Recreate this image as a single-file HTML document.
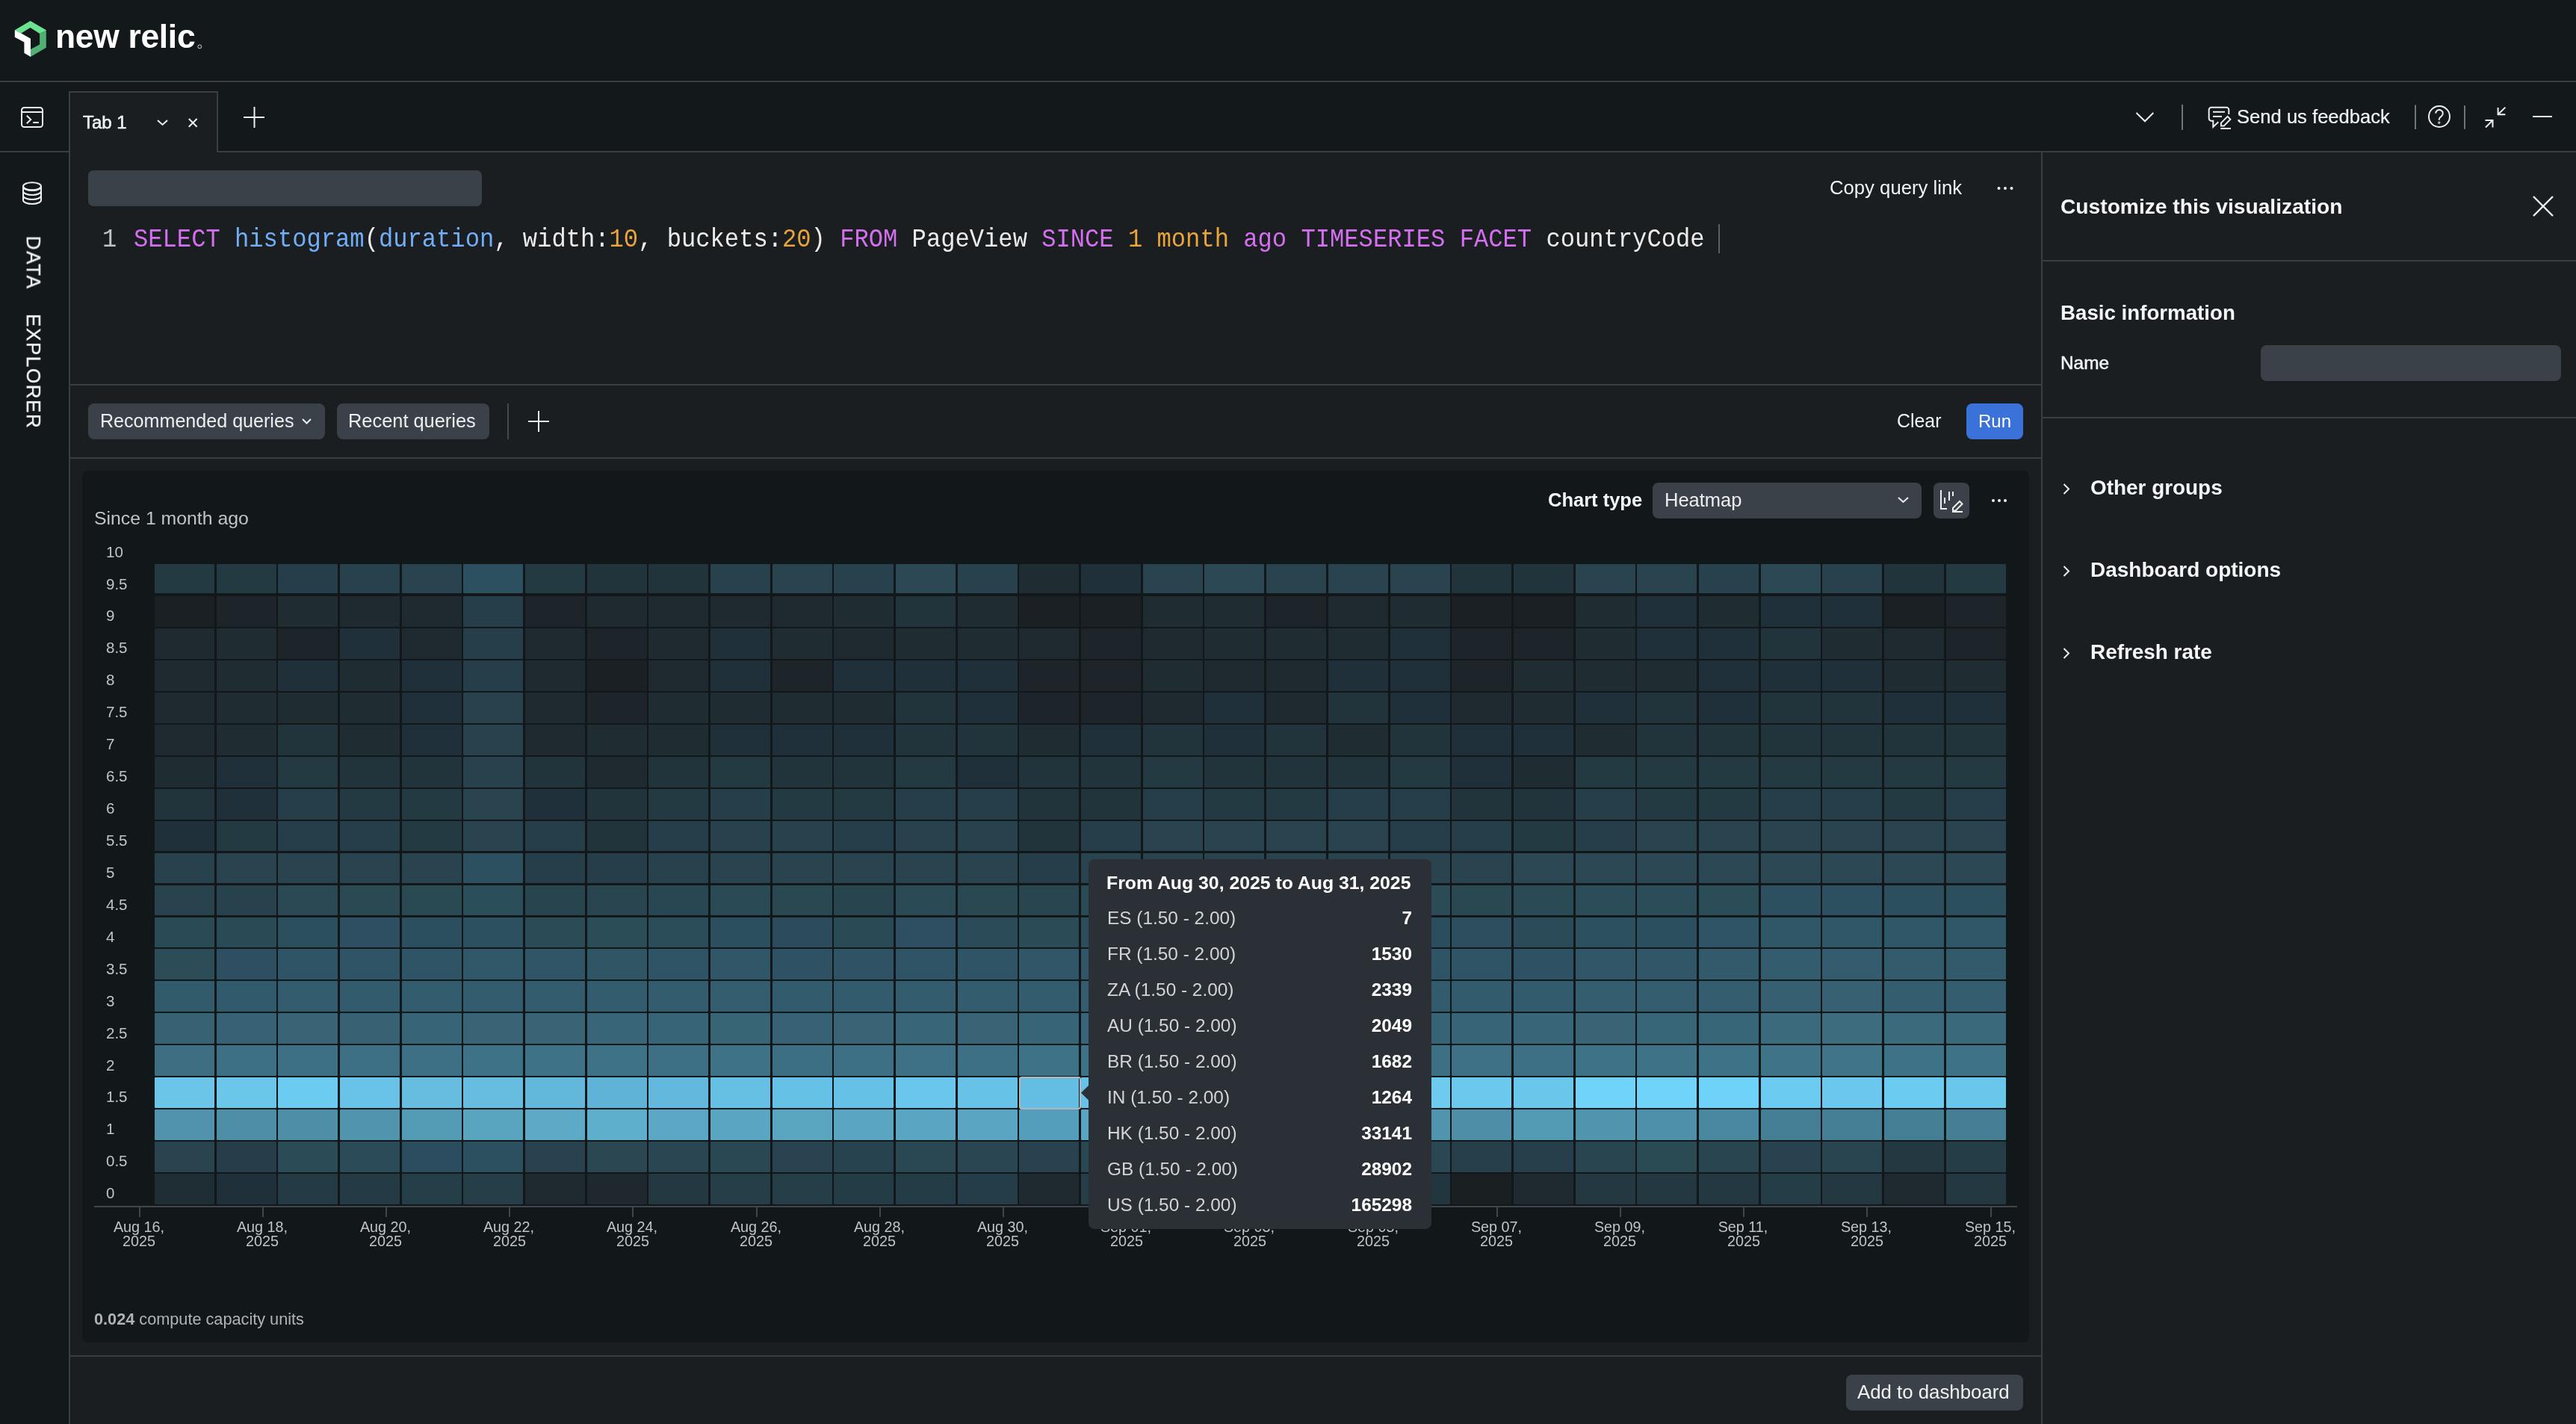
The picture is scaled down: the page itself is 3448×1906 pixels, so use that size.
<!DOCTYPE html>
<html><head><meta charset="utf-8">
<style>
*{box-sizing:border-box;margin:0;padding:0}
html,body{width:3448px;height:1906px;overflow:hidden;background:#1a1e21}
body{position:relative;font-family:"Liberation Sans",sans-serif;color:#eceef0}
.a{position:absolute}
.t{position:absolute;white-space:nowrap;line-height:1;will-change:transform}
.b{font-weight:bold}
.ln{position:absolute;background:#393e44}
.btn{position:absolute;background:#3b4148;border-radius:8px}
.mono{font-family:"Liberation Mono",monospace}
.hm{position:absolute;border-radius:1px}
.yl{position:absolute;left:0;width:200px;white-space:nowrap;line-height:1;font-size:20.5px;color:#c0c4c8;will-change:transform}
.xl{position:absolute;width:120px;text-align:center;white-space:nowrap;line-height:1;font-size:19.8px;color:#c0c4c8;will-change:transform}
.tk{position:absolute;width:2px;height:13px;top:1616px;background:#40464d}
.tr{position:absolute;left:1482px;width:408px;line-height:1;font-size:24.4px;white-space:nowrap;will-change:transform}
.tr span{position:absolute;right:0;top:0;font-weight:bold;color:#fff}
.tr em{font-style:normal;color:#d2d5d8}
svg{position:absolute;overflow:visible}
</style></head><body>
<!-- header -->
<div class="a" style="left:0;top:0;width:3448px;height:204px;background:#13191b"></div>
<svg style="left:0;top:0" width="90" height="90" viewBox="0 0 90 90">
 <polygon fill="#6be391" points="19.8,40.3 40.6,28 61.8,40.3 61.8,41 53.1,44.9 40.6,37.1 28.3,44.4"/>
 <polygon fill="#52af74" points="61.8,41 61.8,63.8 41,75.9 41,66.1 53.1,59.5 53.1,44.9"/>
 <polygon fill="#ffffff" points="19.8,40.3 28.3,44.4 41,51.8 41,75.9 32.4,71.1 32.4,56.5 19.8,49.7"/>
</svg>
<div class="t b" style="left:74px;top:27px;font-size:44.4px;letter-spacing:-0.3px;color:#fff">new relic</div>
<svg style="left:0;top:0" width="300" height="100" viewBox="0 0 300 100"><circle cx="267.3" cy="62.4" r="2.4" fill="none" stroke="#fff" stroke-width="0.8"/></svg>
<div class="ln" style="left:0;top:108px;width:3448px;height:2px"></div>
<!-- tab bar -->
<svg style="left:0;top:0" width="100" height="200" viewBox="0 0 100 200" fill="none" stroke="#eceef0" stroke-width="2">
 <rect x="29" y="144" width="28" height="26" rx="3.5"/>
 <line x1="29" y1="150" x2="57" y2="150"/>
 <polyline points="35.8,154.8 41.2,160 35.8,165.2"/>
 <line x1="44.2" y1="164" x2="51.8" y2="164"/>
</svg>
<div class="a" style="left:92px;top:122px;width:200px;height:82px;background:#1a1e21;border:2px solid #393e44;border-bottom:none"></div>
<div class="t" style="left:111px;top:151.8px;font-size:24px;color:#f0f2f4;-webkit-text-stroke:0.55px #f0f2f4">Tab 1</div>
<svg style="left:0;top:0" width="400" height="200" viewBox="0 0 400 200" fill="none" stroke="#eceef0" stroke-width="2">
 <polyline points="211,161 217.5,167 224,161"/>
 <line x1="252.8" y1="159" x2="263.6" y2="169.8"/><line x1="263.6" y1="159" x2="252.8" y2="169.8"/>
 <line x1="340.5" y1="143" x2="340.5" y2="171"/><line x1="326" y1="157" x2="354" y2="157"/>
</svg>
<div class="ln" style="left:0;top:202px;width:92px;height:2px"></div>
<div class="ln" style="left:290px;top:202px;width:3158px;height:2px"></div>
<!-- top right -->
<svg style="left:0;top:0" width="3448" height="200" viewBox="0 0 3448 200" fill="none" stroke="#eceef0" stroke-width="2">
 <polyline points="2859.5,151 2871,162.3 2882.3,151"/>
 <line x1="2921" y1="140" x2="2921" y2="174" stroke="#70757b"/>
 <line x1="3233" y1="140.5" x2="3233" y2="173" stroke="#70757b"/>
 <line x1="3299" y1="141.3" x2="3299" y2="172.7" stroke="#70757b"/>
 <path d="M2983.3,153 V147 a3.3,3.3 0 0 0 -3.3,-3.3 H2960 a3.3,3.3 0 0 0 -3.3,3.3 V158.4 a3.3,3.3 0 0 0 3.3,3.3 H2962.3 V170 L2969.3,163.3"/>
 <line x1="2962" y1="149.8" x2="2978" y2="149.8"/><line x1="2962" y1="155.9" x2="2974" y2="155.9"/>
 <path d="M2972.9,168.6 V164.6 L2981.6,155.9 L2985.4,159.7 L2976.7,168.6 Z"/><line x1="2972.3" y1="172" x2="2986" y2="172"/>
 <circle cx="3265" cy="156" r="14"/>
 <path d="M3260.2,151.8 a4.8,4.8 0 1 1 7.4,4 c-1.7,1.1 -2.8,1.9 -2.8,3.7 v1.3"/>
 <circle cx="3264.8" cy="164.2" r="0.5" stroke-width="2.2"/>
 <path d="M3327,170.5 L3336.5,161 M3326.5,161 H3336.5 V170.5 M3353.4,143.6 L3343.6,153.3 M3343.6,144 V153.3 H3353.4"/>
 <line x1="3390" y1="156" x2="3416" y2="156"/>
</svg>
<div class="t" style="left:2994px;top:143.5px;font-size:25.6px;color:#f0f2f4;-webkit-text-stroke:0.2px #f0f2f4">Send us feedback</div>
<!-- sidebar -->
<div class="a" style="left:0;top:204px;width:92px;height:1702px;background:#13191b"></div>
<div class="ln" style="left:92px;top:204px;width:2px;height:1702px"></div>
<svg style="left:0;top:0" width="90" height="300" viewBox="0 0 90 300" fill="none" stroke="#eceef0" stroke-width="2">
 <ellipse cx="43" cy="249.3" rx="12" ry="5"/>
 <path d="M31,249.3 v18.7 a12,5 0 0 0 24,0 v-18.7 M31,250 a12,5 0 0 0 24,0 M31,256 a12,5 0 0 0 24,0 M31,262 a12,5 0 0 0 24,0"/>
</svg>
<div class="t" style="left:0;top:0;font-size:26px;letter-spacing:1.6px;color:#f0f2f4;-webkit-text-stroke:0.35px #f0f2f4;transform-origin:0 0;transform:translate(57.9px,315.6px) rotate(90deg)">DATA</div>
<div class="t" style="left:0;top:0;font-size:26px;letter-spacing:1.6px;color:#f0f2f4;-webkit-text-stroke:0.35px #f0f2f4;transform-origin:0 0;transform:translate(57.9px,420px) rotate(90deg)">EXPLORER</div>
<!-- editor -->
<div class="btn" style="left:118px;top:228px;width:527px;height:48px;border-radius:7px"></div>
<div class="t mono" style="left:136.5px;top:305.6px;font-size:32.15px;color:#c0c4c8;transform-origin:0 24.4px;transform:scaleY(1.11)">1</div>
<div class="t mono" style="left:178.5px;top:305.6px;font-size:32.15px;color:#ececec;transform-origin:0 24.4px;transform:scaleY(1.11)"><span style="color:#d46ff0">SELECT</span> <span style="color:#72aef5">histogram</span>(<span style="color:#72aef5">duration</span>, width:<span style="color:#e9a43a">10</span>, buckets:<span style="color:#e9a43a">20</span>) <span style="color:#d46ff0">FROM</span> PageView <span style="color:#d46ff0">SINCE</span> <span style="color:#e9a43a">1 month</span> <span style="color:#d46ff0">ago</span> <span style="color:#d46ff0">TIMESERIES</span> <span style="color:#d46ff0">FACET</span> countryCode</div>
<div class="a" style="left:2300px;top:300px;width:2px;height:39px;background:#5a5f64"></div>
<div class="t" style="left:2449px;top:239px;font-size:25.7px;color:#f0f2f4">Copy query link</div>
<svg style="left:0;top:0" width="3448" height="800" viewBox="0 0 3448 800" fill="#eceef0">
 <circle cx="2675.5" cy="252" r="2"/><circle cx="2684" cy="252" r="2"/><circle cx="2692.5" cy="252" r="2"/>
</svg>
<div class="ln" style="left:94px;top:514px;width:2638px;height:2px"></div>
<!-- toolbar -->
<div class="btn" style="left:118px;top:540px;width:317px;height:48px"></div>
<div class="t" style="left:134px;top:551px;font-size:25.1px;color:#eceef0">Recommended queries</div>
<div class="btn" style="left:451px;top:540px;width:204px;height:48px"></div>
<div class="t" style="left:466px;top:551px;font-size:25.4px;color:#eceef0">Recent queries</div>
<div class="a" style="left:679px;top:540px;width:2px;height:48px;background:#43484e"></div>
<svg style="left:0;top:0" width="3448" height="800" viewBox="0 0 3448 800" fill="none" stroke="#eceef0" stroke-width="2">
 <polyline points="405,561 410.5,566.5 416,561"/>
 <line x1="721" y1="550" x2="721" y2="578"/><line x1="707" y1="564" x2="735" y2="564"/>
</svg>
<div class="t" style="left:2539px;top:551px;font-size:24.9px;color:#f0f2f4">Clear</div>
<div class="a" style="left:2632px;top:540px;width:76px;height:48px;background:#3a72d9;border-radius:8px"></div>
<div class="t" style="left:2648px;top:552px;font-size:24px;color:#fff">Run</div>
<div class="ln" style="left:94px;top:612px;width:2638px;height:2px"></div>
<!-- chart card -->
<div class="a" style="left:110px;top:630px;width:2606px;height:1167px;background:#12181a;border-radius:8px"></div>
<div class="t" style="left:126px;top:681.5px;font-size:24.8px;color:#c0c4c8">Since 1 month ago</div>
<div class="t b" style="left:2072px;top:657px;font-size:25.5px;color:#f4f6f8">Chart type</div>
<div class="btn" style="left:2212px;top:646px;width:360px;height:48px"></div>
<div class="t" style="left:2228px;top:657px;font-size:25.5px;color:#eceef0">Heatmap</div>
<div class="btn" style="left:2588px;top:646px;width:48px;height:48px"></div>
<svg style="left:0;top:0" width="3448" height="800" viewBox="0 0 3448 800" fill="none" stroke="#eceef0" stroke-width="2">
 <polyline points="2541,666 2547.5,672 2554,666"/>
 <path d="M2598,656 v25 h8 M2603,674 v-8 M2609,670 v-12 M2614,664 v-6"/>
 <path d="M2614,680 l9,-9 l3.5,3.5 l-9,9 h-3.5 z M2613,685 h14"/>
</svg>
<svg style="left:0;top:0" width="3448" height="800" viewBox="0 0 3448 800" fill="#eceef0">
 <circle cx="2668" cy="670" r="2"/><circle cx="2676" cy="670" r="2"/><circle cx="2684" cy="670" r="2"/>
</svg>
<div class="yl" style="left:142px;top:728.6px">10</div>
<div class="yl" style="left:142px;top:771.5px">9.5</div>
<div class="yl" style="left:142px;top:814.4px">9</div>
<div class="yl" style="left:142px;top:857.4px">8.5</div>
<div class="yl" style="left:142px;top:900.3px">8</div>
<div class="yl" style="left:142px;top:943.2px">7.5</div>
<div class="yl" style="left:142px;top:986.2px">7</div>
<div class="yl" style="left:142px;top:1029.1px">6.5</div>
<div class="yl" style="left:142px;top:1072.0px">6</div>
<div class="yl" style="left:142px;top:1114.9px">5.5</div>
<div class="yl" style="left:142px;top:1157.9px">5</div>
<div class="yl" style="left:142px;top:1200.8px">4.5</div>
<div class="yl" style="left:142px;top:1243.7px">4</div>
<div class="yl" style="left:142px;top:1286.7px">3.5</div>
<div class="yl" style="left:142px;top:1329.6px">3</div>
<div class="yl" style="left:142px;top:1372.5px">2.5</div>
<div class="yl" style="left:142px;top:1415.5px">2</div>
<div class="yl" style="left:142px;top:1458.4px">1.5</div>
<div class="yl" style="left:142px;top:1501.3px">1</div>
<div class="yl" style="left:142px;top:1544.2px">0.5</div>
<div class="yl" style="left:142px;top:1587.2px">0</div>
<div class="hm" style="left:206.8px;top:755.0px;width:80.1px;height:39.0px;background:#243a43"></div>
<div class="hm" style="left:289.5px;top:755.0px;width:80.1px;height:39.0px;background:#243a43"></div>
<div class="hm" style="left:372.2px;top:755.0px;width:80.1px;height:39.0px;background:#263e49"></div>
<div class="hm" style="left:454.9px;top:755.0px;width:80.1px;height:39.0px;background:#28424d"></div>
<div class="hm" style="left:537.6px;top:755.0px;width:80.1px;height:39.0px;background:#29444f"></div>
<div class="hm" style="left:620.2px;top:755.0px;width:80.1px;height:39.0px;background:#2d5060"></div>
<div class="hm" style="left:702.9px;top:755.0px;width:80.1px;height:39.0px;background:#243a43"></div>
<div class="hm" style="left:785.6px;top:755.0px;width:80.1px;height:39.0px;background:#22343b"></div>
<div class="hm" style="left:868.3px;top:755.0px;width:80.1px;height:39.0px;background:#22343b"></div>
<div class="hm" style="left:951.0px;top:755.0px;width:80.1px;height:39.0px;background:#28424d"></div>
<div class="hm" style="left:1033.7px;top:755.0px;width:80.1px;height:39.0px;background:#29444f"></div>
<div class="hm" style="left:1116.3px;top:755.0px;width:80.1px;height:39.0px;background:#28424d"></div>
<div class="hm" style="left:1199.0px;top:755.0px;width:80.1px;height:39.0px;background:#2b4854"></div>
<div class="hm" style="left:1281.7px;top:755.0px;width:80.1px;height:39.0px;background:#28424d"></div>
<div class="hm" style="left:1364.4px;top:755.0px;width:80.1px;height:39.0px;background:#1f2c32"></div>
<div class="hm" style="left:1447.0px;top:755.0px;width:80.1px;height:39.0px;background:#20303a"></div>
<div class="hm" style="left:1529.7px;top:755.0px;width:80.1px;height:39.0px;background:#29444f"></div>
<div class="hm" style="left:1612.4px;top:755.0px;width:80.1px;height:39.0px;background:#2b4854"></div>
<div class="hm" style="left:1695.1px;top:755.0px;width:80.1px;height:39.0px;background:#29444f"></div>
<div class="hm" style="left:1777.8px;top:755.0px;width:80.1px;height:39.0px;background:#29444f"></div>
<div class="hm" style="left:1860.5px;top:755.0px;width:80.1px;height:39.0px;background:#29444f"></div>
<div class="hm" style="left:1943.1px;top:755.0px;width:80.1px;height:39.0px;background:#22343b"></div>
<div class="hm" style="left:2025.8px;top:755.0px;width:80.1px;height:39.0px;background:#22343b"></div>
<div class="hm" style="left:2108.5px;top:755.0px;width:80.1px;height:39.0px;background:#29444f"></div>
<div class="hm" style="left:2191.2px;top:755.0px;width:80.1px;height:39.0px;background:#29444f"></div>
<div class="hm" style="left:2273.8px;top:755.0px;width:80.1px;height:39.0px;background:#28424d"></div>
<div class="hm" style="left:2356.5px;top:755.0px;width:80.1px;height:39.0px;background:#2b4854"></div>
<div class="hm" style="left:2439.2px;top:755.0px;width:80.1px;height:39.0px;background:#28424d"></div>
<div class="hm" style="left:2521.9px;top:755.0px;width:80.1px;height:39.0px;background:#22343b"></div>
<div class="hm" style="left:2604.6px;top:755.0px;width:80.1px;height:39.0px;background:#243a43"></div>
<div class="hm" style="left:206.8px;top:798.0px;width:80.1px;height:40.9px;background:#1a2023"></div>
<div class="hm" style="left:289.5px;top:798.0px;width:80.1px;height:40.9px;background:#1d252a"></div>
<div class="hm" style="left:372.2px;top:798.0px;width:80.1px;height:40.9px;background:#1f2c32"></div>
<div class="hm" style="left:454.9px;top:798.0px;width:80.1px;height:40.9px;background:#1f2a30"></div>
<div class="hm" style="left:537.6px;top:798.0px;width:80.1px;height:40.9px;background:#1f2a30"></div>
<div class="hm" style="left:620.2px;top:798.0px;width:80.1px;height:40.9px;background:#263e49"></div>
<div class="hm" style="left:702.9px;top:798.0px;width:80.1px;height:40.9px;background:#1d252a"></div>
<div class="hm" style="left:785.6px;top:798.0px;width:80.1px;height:40.9px;background:#1f2a30"></div>
<div class="hm" style="left:868.3px;top:798.0px;width:80.1px;height:40.9px;background:#1f2a30"></div>
<div class="hm" style="left:951.0px;top:798.0px;width:80.1px;height:40.9px;background:#1f2a30"></div>
<div class="hm" style="left:1033.7px;top:798.0px;width:80.1px;height:40.9px;background:#1f2a30"></div>
<div class="hm" style="left:1116.3px;top:798.0px;width:80.1px;height:40.9px;background:#1f2c32"></div>
<div class="hm" style="left:1199.0px;top:798.0px;width:80.1px;height:40.9px;background:#22343b"></div>
<div class="hm" style="left:1281.7px;top:798.0px;width:80.1px;height:40.9px;background:#1f2c32"></div>
<div class="hm" style="left:1364.4px;top:798.0px;width:80.1px;height:40.9px;background:#1a2023"></div>
<div class="hm" style="left:1447.0px;top:798.0px;width:80.1px;height:40.9px;background:#1a2023"></div>
<div class="hm" style="left:1529.7px;top:798.0px;width:80.1px;height:40.9px;background:#1f2c32"></div>
<div class="hm" style="left:1612.4px;top:798.0px;width:80.1px;height:40.9px;background:#1f2c32"></div>
<div class="hm" style="left:1695.1px;top:798.0px;width:80.1px;height:40.9px;background:#1d252a"></div>
<div class="hm" style="left:1777.8px;top:798.0px;width:80.1px;height:40.9px;background:#1f2a30"></div>
<div class="hm" style="left:1860.5px;top:798.0px;width:80.1px;height:40.9px;background:#1f2c32"></div>
<div class="hm" style="left:1943.1px;top:798.0px;width:80.1px;height:40.9px;background:#1a2023"></div>
<div class="hm" style="left:2025.8px;top:798.0px;width:80.1px;height:40.9px;background:#1a2023"></div>
<div class="hm" style="left:2108.5px;top:798.0px;width:80.1px;height:40.9px;background:#1f2c32"></div>
<div class="hm" style="left:2191.2px;top:798.0px;width:80.1px;height:40.9px;background:#20303a"></div>
<div class="hm" style="left:2273.8px;top:798.0px;width:80.1px;height:40.9px;background:#1f2c32"></div>
<div class="hm" style="left:2356.5px;top:798.0px;width:80.1px;height:40.9px;background:#20303a"></div>
<div class="hm" style="left:2439.2px;top:798.0px;width:80.1px;height:40.9px;background:#20303a"></div>
<div class="hm" style="left:2521.9px;top:798.0px;width:80.1px;height:40.9px;background:#1a2023"></div>
<div class="hm" style="left:2604.6px;top:798.0px;width:80.1px;height:40.9px;background:#1d252a"></div>
<div class="hm" style="left:206.8px;top:840.9px;width:80.1px;height:40.9px;background:#1f2a30"></div>
<div class="hm" style="left:289.5px;top:840.9px;width:80.1px;height:40.9px;background:#1f2c32"></div>
<div class="hm" style="left:372.2px;top:840.9px;width:80.1px;height:40.9px;background:#1d252a"></div>
<div class="hm" style="left:454.9px;top:840.9px;width:80.1px;height:40.9px;background:#20303a"></div>
<div class="hm" style="left:537.6px;top:840.9px;width:80.1px;height:40.9px;background:#1f2a30"></div>
<div class="hm" style="left:620.2px;top:840.9px;width:80.1px;height:40.9px;background:#263e49"></div>
<div class="hm" style="left:702.9px;top:840.9px;width:80.1px;height:40.9px;background:#1f2a30"></div>
<div class="hm" style="left:785.6px;top:840.9px;width:80.1px;height:40.9px;background:#1d252a"></div>
<div class="hm" style="left:868.3px;top:840.9px;width:80.1px;height:40.9px;background:#1f2a30"></div>
<div class="hm" style="left:951.0px;top:840.9px;width:80.1px;height:40.9px;background:#20303a"></div>
<div class="hm" style="left:1033.7px;top:840.9px;width:80.1px;height:40.9px;background:#1f2c32"></div>
<div class="hm" style="left:1116.3px;top:840.9px;width:80.1px;height:40.9px;background:#1f2a30"></div>
<div class="hm" style="left:1199.0px;top:840.9px;width:80.1px;height:40.9px;background:#1f2c32"></div>
<div class="hm" style="left:1281.7px;top:840.9px;width:80.1px;height:40.9px;background:#1f2c32"></div>
<div class="hm" style="left:1364.4px;top:840.9px;width:80.1px;height:40.9px;background:#1f2a30"></div>
<div class="hm" style="left:1447.0px;top:840.9px;width:80.1px;height:40.9px;background:#1d252a"></div>
<div class="hm" style="left:1529.7px;top:840.9px;width:80.1px;height:40.9px;background:#1f2a30"></div>
<div class="hm" style="left:1612.4px;top:840.9px;width:80.1px;height:40.9px;background:#1f2c32"></div>
<div class="hm" style="left:1695.1px;top:840.9px;width:80.1px;height:40.9px;background:#1f2c32"></div>
<div class="hm" style="left:1777.8px;top:840.9px;width:80.1px;height:40.9px;background:#1f2c32"></div>
<div class="hm" style="left:1860.5px;top:840.9px;width:80.1px;height:40.9px;background:#20303a"></div>
<div class="hm" style="left:1943.1px;top:840.9px;width:80.1px;height:40.9px;background:#1d252a"></div>
<div class="hm" style="left:2025.8px;top:840.9px;width:80.1px;height:40.9px;background:#1d252a"></div>
<div class="hm" style="left:2108.5px;top:840.9px;width:80.1px;height:40.9px;background:#1f2c32"></div>
<div class="hm" style="left:2191.2px;top:840.9px;width:80.1px;height:40.9px;background:#20303a"></div>
<div class="hm" style="left:2273.8px;top:840.9px;width:80.1px;height:40.9px;background:#20303a"></div>
<div class="hm" style="left:2356.5px;top:840.9px;width:80.1px;height:40.9px;background:#22343b"></div>
<div class="hm" style="left:2439.2px;top:840.9px;width:80.1px;height:40.9px;background:#1f2c32"></div>
<div class="hm" style="left:2521.9px;top:840.9px;width:80.1px;height:40.9px;background:#1f2a30"></div>
<div class="hm" style="left:2604.6px;top:840.9px;width:80.1px;height:40.9px;background:#1d252a"></div>
<div class="hm" style="left:206.8px;top:883.9px;width:80.1px;height:40.9px;background:#1f2a30"></div>
<div class="hm" style="left:289.5px;top:883.9px;width:80.1px;height:40.9px;background:#1f2c32"></div>
<div class="hm" style="left:372.2px;top:883.9px;width:80.1px;height:40.9px;background:#20303a"></div>
<div class="hm" style="left:454.9px;top:883.9px;width:80.1px;height:40.9px;background:#1f2c32"></div>
<div class="hm" style="left:537.6px;top:883.9px;width:80.1px;height:40.9px;background:#20303a"></div>
<div class="hm" style="left:620.2px;top:883.9px;width:80.1px;height:40.9px;background:#263e49"></div>
<div class="hm" style="left:702.9px;top:883.9px;width:80.1px;height:40.9px;background:#1f2a30"></div>
<div class="hm" style="left:785.6px;top:883.9px;width:80.1px;height:40.9px;background:#1a2023"></div>
<div class="hm" style="left:868.3px;top:883.9px;width:80.1px;height:40.9px;background:#1f2a30"></div>
<div class="hm" style="left:951.0px;top:883.9px;width:80.1px;height:40.9px;background:#20303a"></div>
<div class="hm" style="left:1033.7px;top:883.9px;width:80.1px;height:40.9px;background:#1d252a"></div>
<div class="hm" style="left:1116.3px;top:883.9px;width:80.1px;height:40.9px;background:#20303a"></div>
<div class="hm" style="left:1199.0px;top:883.9px;width:80.1px;height:40.9px;background:#20303a"></div>
<div class="hm" style="left:1281.7px;top:883.9px;width:80.1px;height:40.9px;background:#20303a"></div>
<div class="hm" style="left:1364.4px;top:883.9px;width:80.1px;height:40.9px;background:#1d252a"></div>
<div class="hm" style="left:1447.0px;top:883.9px;width:80.1px;height:40.9px;background:#1d252a"></div>
<div class="hm" style="left:1529.7px;top:883.9px;width:80.1px;height:40.9px;background:#1f2c32"></div>
<div class="hm" style="left:1612.4px;top:883.9px;width:80.1px;height:40.9px;background:#1f2a30"></div>
<div class="hm" style="left:1695.1px;top:883.9px;width:80.1px;height:40.9px;background:#1f2a30"></div>
<div class="hm" style="left:1777.8px;top:883.9px;width:80.1px;height:40.9px;background:#20303a"></div>
<div class="hm" style="left:1860.5px;top:883.9px;width:80.1px;height:40.9px;background:#20303a"></div>
<div class="hm" style="left:1943.1px;top:883.9px;width:80.1px;height:40.9px;background:#1d252a"></div>
<div class="hm" style="left:2025.8px;top:883.9px;width:80.1px;height:40.9px;background:#1f2c32"></div>
<div class="hm" style="left:2108.5px;top:883.9px;width:80.1px;height:40.9px;background:#1f2c32"></div>
<div class="hm" style="left:2191.2px;top:883.9px;width:80.1px;height:40.9px;background:#1f2c32"></div>
<div class="hm" style="left:2273.8px;top:883.9px;width:80.1px;height:40.9px;background:#20303a"></div>
<div class="hm" style="left:2356.5px;top:883.9px;width:80.1px;height:40.9px;background:#20303a"></div>
<div class="hm" style="left:2439.2px;top:883.9px;width:80.1px;height:40.9px;background:#20303a"></div>
<div class="hm" style="left:2521.9px;top:883.9px;width:80.1px;height:40.9px;background:#1f2c32"></div>
<div class="hm" style="left:2604.6px;top:883.9px;width:80.1px;height:40.9px;background:#1f2c32"></div>
<div class="hm" style="left:206.8px;top:926.8px;width:80.1px;height:40.9px;background:#1f2a30"></div>
<div class="hm" style="left:289.5px;top:926.8px;width:80.1px;height:40.9px;background:#1f2c32"></div>
<div class="hm" style="left:372.2px;top:926.8px;width:80.1px;height:40.9px;background:#1f2c32"></div>
<div class="hm" style="left:454.9px;top:926.8px;width:80.1px;height:40.9px;background:#1f2c32"></div>
<div class="hm" style="left:537.6px;top:926.8px;width:80.1px;height:40.9px;background:#20303a"></div>
<div class="hm" style="left:620.2px;top:926.8px;width:80.1px;height:40.9px;background:#28424d"></div>
<div class="hm" style="left:702.9px;top:926.8px;width:80.1px;height:40.9px;background:#1f2a30"></div>
<div class="hm" style="left:785.6px;top:926.8px;width:80.1px;height:40.9px;background:#1d252a"></div>
<div class="hm" style="left:868.3px;top:926.8px;width:80.1px;height:40.9px;background:#1f2c32"></div>
<div class="hm" style="left:951.0px;top:926.8px;width:80.1px;height:40.9px;background:#1f2c32"></div>
<div class="hm" style="left:1033.7px;top:926.8px;width:80.1px;height:40.9px;background:#1f2c32"></div>
<div class="hm" style="left:1116.3px;top:926.8px;width:80.1px;height:40.9px;background:#1f2c32"></div>
<div class="hm" style="left:1199.0px;top:926.8px;width:80.1px;height:40.9px;background:#22343b"></div>
<div class="hm" style="left:1281.7px;top:926.8px;width:80.1px;height:40.9px;background:#20303a"></div>
<div class="hm" style="left:1364.4px;top:926.8px;width:80.1px;height:40.9px;background:#1d252a"></div>
<div class="hm" style="left:1447.0px;top:926.8px;width:80.1px;height:40.9px;background:#1d252a"></div>
<div class="hm" style="left:1529.7px;top:926.8px;width:80.1px;height:40.9px;background:#1f2a30"></div>
<div class="hm" style="left:1612.4px;top:926.8px;width:80.1px;height:40.9px;background:#20303a"></div>
<div class="hm" style="left:1695.1px;top:926.8px;width:80.1px;height:40.9px;background:#1f2a30"></div>
<div class="hm" style="left:1777.8px;top:926.8px;width:80.1px;height:40.9px;background:#22343b"></div>
<div class="hm" style="left:1860.5px;top:926.8px;width:80.1px;height:40.9px;background:#20303a"></div>
<div class="hm" style="left:1943.1px;top:926.8px;width:80.1px;height:40.9px;background:#1f2a30"></div>
<div class="hm" style="left:2025.8px;top:926.8px;width:80.1px;height:40.9px;background:#1f2c32"></div>
<div class="hm" style="left:2108.5px;top:926.8px;width:80.1px;height:40.9px;background:#20303a"></div>
<div class="hm" style="left:2191.2px;top:926.8px;width:80.1px;height:40.9px;background:#22343b"></div>
<div class="hm" style="left:2273.8px;top:926.8px;width:80.1px;height:40.9px;background:#20303a"></div>
<div class="hm" style="left:2356.5px;top:926.8px;width:80.1px;height:40.9px;background:#22343b"></div>
<div class="hm" style="left:2439.2px;top:926.8px;width:80.1px;height:40.9px;background:#22343b"></div>
<div class="hm" style="left:2521.9px;top:926.8px;width:80.1px;height:40.9px;background:#20303a"></div>
<div class="hm" style="left:2604.6px;top:926.8px;width:80.1px;height:40.9px;background:#20303a"></div>
<div class="hm" style="left:206.8px;top:969.8px;width:80.1px;height:40.9px;background:#1f2a30"></div>
<div class="hm" style="left:289.5px;top:969.8px;width:80.1px;height:40.9px;background:#1f2c32"></div>
<div class="hm" style="left:372.2px;top:969.8px;width:80.1px;height:40.9px;background:#22343b"></div>
<div class="hm" style="left:454.9px;top:969.8px;width:80.1px;height:40.9px;background:#1f2c32"></div>
<div class="hm" style="left:537.6px;top:969.8px;width:80.1px;height:40.9px;background:#20303a"></div>
<div class="hm" style="left:620.2px;top:969.8px;width:80.1px;height:40.9px;background:#28424d"></div>
<div class="hm" style="left:702.9px;top:969.8px;width:80.1px;height:40.9px;background:#1f2a30"></div>
<div class="hm" style="left:785.6px;top:969.8px;width:80.1px;height:40.9px;background:#1f2c32"></div>
<div class="hm" style="left:868.3px;top:969.8px;width:80.1px;height:40.9px;background:#1f2c32"></div>
<div class="hm" style="left:951.0px;top:969.8px;width:80.1px;height:40.9px;background:#20303a"></div>
<div class="hm" style="left:1033.7px;top:969.8px;width:80.1px;height:40.9px;background:#20303a"></div>
<div class="hm" style="left:1116.3px;top:969.8px;width:80.1px;height:40.9px;background:#20303a"></div>
<div class="hm" style="left:1199.0px;top:969.8px;width:80.1px;height:40.9px;background:#22343b"></div>
<div class="hm" style="left:1281.7px;top:969.8px;width:80.1px;height:40.9px;background:#22343b"></div>
<div class="hm" style="left:1364.4px;top:969.8px;width:80.1px;height:40.9px;background:#1f2c32"></div>
<div class="hm" style="left:1447.0px;top:969.8px;width:80.1px;height:40.9px;background:#20303a"></div>
<div class="hm" style="left:1529.7px;top:969.8px;width:80.1px;height:40.9px;background:#22343b"></div>
<div class="hm" style="left:1612.4px;top:969.8px;width:80.1px;height:40.9px;background:#20303a"></div>
<div class="hm" style="left:1695.1px;top:969.8px;width:80.1px;height:40.9px;background:#22343b"></div>
<div class="hm" style="left:1777.8px;top:969.8px;width:80.1px;height:40.9px;background:#1f2c32"></div>
<div class="hm" style="left:1860.5px;top:969.8px;width:80.1px;height:40.9px;background:#22343b"></div>
<div class="hm" style="left:1943.1px;top:969.8px;width:80.1px;height:40.9px;background:#20303a"></div>
<div class="hm" style="left:2025.8px;top:969.8px;width:80.1px;height:40.9px;background:#20303a"></div>
<div class="hm" style="left:2108.5px;top:969.8px;width:80.1px;height:40.9px;background:#1f2c32"></div>
<div class="hm" style="left:2191.2px;top:969.8px;width:80.1px;height:40.9px;background:#22343b"></div>
<div class="hm" style="left:2273.8px;top:969.8px;width:80.1px;height:40.9px;background:#22343b"></div>
<div class="hm" style="left:2356.5px;top:969.8px;width:80.1px;height:40.9px;background:#22343b"></div>
<div class="hm" style="left:2439.2px;top:969.8px;width:80.1px;height:40.9px;background:#22343b"></div>
<div class="hm" style="left:2521.9px;top:969.8px;width:80.1px;height:40.9px;background:#22343b"></div>
<div class="hm" style="left:2604.6px;top:969.8px;width:80.1px;height:40.9px;background:#22343b"></div>
<div class="hm" style="left:206.8px;top:1012.7px;width:80.1px;height:40.9px;background:#1f2c32"></div>
<div class="hm" style="left:289.5px;top:1012.7px;width:80.1px;height:40.9px;background:#20303a"></div>
<div class="hm" style="left:372.2px;top:1012.7px;width:80.1px;height:40.9px;background:#243a43"></div>
<div class="hm" style="left:454.9px;top:1012.7px;width:80.1px;height:40.9px;background:#22343b"></div>
<div class="hm" style="left:537.6px;top:1012.7px;width:80.1px;height:40.9px;background:#22343b"></div>
<div class="hm" style="left:620.2px;top:1012.7px;width:80.1px;height:40.9px;background:#28424d"></div>
<div class="hm" style="left:702.9px;top:1012.7px;width:80.1px;height:40.9px;background:#22343b"></div>
<div class="hm" style="left:785.6px;top:1012.7px;width:80.1px;height:40.9px;background:#1f2a30"></div>
<div class="hm" style="left:868.3px;top:1012.7px;width:80.1px;height:40.9px;background:#22343b"></div>
<div class="hm" style="left:951.0px;top:1012.7px;width:80.1px;height:40.9px;background:#243a43"></div>
<div class="hm" style="left:1033.7px;top:1012.7px;width:80.1px;height:40.9px;background:#22343b"></div>
<div class="hm" style="left:1116.3px;top:1012.7px;width:80.1px;height:40.9px;background:#22343b"></div>
<div class="hm" style="left:1199.0px;top:1012.7px;width:80.1px;height:40.9px;background:#243a43"></div>
<div class="hm" style="left:1281.7px;top:1012.7px;width:80.1px;height:40.9px;background:#20303a"></div>
<div class="hm" style="left:1364.4px;top:1012.7px;width:80.1px;height:40.9px;background:#22343b"></div>
<div class="hm" style="left:1447.0px;top:1012.7px;width:80.1px;height:40.9px;background:#22343b"></div>
<div class="hm" style="left:1529.7px;top:1012.7px;width:80.1px;height:40.9px;background:#243a43"></div>
<div class="hm" style="left:1612.4px;top:1012.7px;width:80.1px;height:40.9px;background:#22343b"></div>
<div class="hm" style="left:1695.1px;top:1012.7px;width:80.1px;height:40.9px;background:#22343b"></div>
<div class="hm" style="left:1777.8px;top:1012.7px;width:80.1px;height:40.9px;background:#22343b"></div>
<div class="hm" style="left:1860.5px;top:1012.7px;width:80.1px;height:40.9px;background:#243a43"></div>
<div class="hm" style="left:1943.1px;top:1012.7px;width:80.1px;height:40.9px;background:#20303a"></div>
<div class="hm" style="left:2025.8px;top:1012.7px;width:80.1px;height:40.9px;background:#1f2c32"></div>
<div class="hm" style="left:2108.5px;top:1012.7px;width:80.1px;height:40.9px;background:#243a43"></div>
<div class="hm" style="left:2191.2px;top:1012.7px;width:80.1px;height:40.9px;background:#243a43"></div>
<div class="hm" style="left:2273.8px;top:1012.7px;width:80.1px;height:40.9px;background:#243a43"></div>
<div class="hm" style="left:2356.5px;top:1012.7px;width:80.1px;height:40.9px;background:#243a43"></div>
<div class="hm" style="left:2439.2px;top:1012.7px;width:80.1px;height:40.9px;background:#243a43"></div>
<div class="hm" style="left:2521.9px;top:1012.7px;width:80.1px;height:40.9px;background:#243a43"></div>
<div class="hm" style="left:2604.6px;top:1012.7px;width:80.1px;height:40.9px;background:#243a43"></div>
<div class="hm" style="left:206.8px;top:1055.7px;width:80.1px;height:40.9px;background:#22343b"></div>
<div class="hm" style="left:289.5px;top:1055.7px;width:80.1px;height:40.9px;background:#20303a"></div>
<div class="hm" style="left:372.2px;top:1055.7px;width:80.1px;height:40.9px;background:#263e49"></div>
<div class="hm" style="left:454.9px;top:1055.7px;width:80.1px;height:40.9px;background:#243a43"></div>
<div class="hm" style="left:537.6px;top:1055.7px;width:80.1px;height:40.9px;background:#243a43"></div>
<div class="hm" style="left:620.2px;top:1055.7px;width:80.1px;height:40.9px;background:#29444f"></div>
<div class="hm" style="left:702.9px;top:1055.7px;width:80.1px;height:40.9px;background:#20303a"></div>
<div class="hm" style="left:785.6px;top:1055.7px;width:80.1px;height:40.9px;background:#22343b"></div>
<div class="hm" style="left:868.3px;top:1055.7px;width:80.1px;height:40.9px;background:#243a43"></div>
<div class="hm" style="left:951.0px;top:1055.7px;width:80.1px;height:40.9px;background:#263e49"></div>
<div class="hm" style="left:1033.7px;top:1055.7px;width:80.1px;height:40.9px;background:#243a43"></div>
<div class="hm" style="left:1116.3px;top:1055.7px;width:80.1px;height:40.9px;background:#243a43"></div>
<div class="hm" style="left:1199.0px;top:1055.7px;width:80.1px;height:40.9px;background:#263e49"></div>
<div class="hm" style="left:1281.7px;top:1055.7px;width:80.1px;height:40.9px;background:#263e49"></div>
<div class="hm" style="left:1364.4px;top:1055.7px;width:80.1px;height:40.9px;background:#22343b"></div>
<div class="hm" style="left:1447.0px;top:1055.7px;width:80.1px;height:40.9px;background:#22343b"></div>
<div class="hm" style="left:1529.7px;top:1055.7px;width:80.1px;height:40.9px;background:#263e49"></div>
<div class="hm" style="left:1612.4px;top:1055.7px;width:80.1px;height:40.9px;background:#243a43"></div>
<div class="hm" style="left:1695.1px;top:1055.7px;width:80.1px;height:40.9px;background:#243a43"></div>
<div class="hm" style="left:1777.8px;top:1055.7px;width:80.1px;height:40.9px;background:#263e49"></div>
<div class="hm" style="left:1860.5px;top:1055.7px;width:80.1px;height:40.9px;background:#263e49"></div>
<div class="hm" style="left:1943.1px;top:1055.7px;width:80.1px;height:40.9px;background:#22343b"></div>
<div class="hm" style="left:2025.8px;top:1055.7px;width:80.1px;height:40.9px;background:#22343b"></div>
<div class="hm" style="left:2108.5px;top:1055.7px;width:80.1px;height:40.9px;background:#263e49"></div>
<div class="hm" style="left:2191.2px;top:1055.7px;width:80.1px;height:40.9px;background:#243a43"></div>
<div class="hm" style="left:2273.8px;top:1055.7px;width:80.1px;height:40.9px;background:#243a43"></div>
<div class="hm" style="left:2356.5px;top:1055.7px;width:80.1px;height:40.9px;background:#263e49"></div>
<div class="hm" style="left:2439.2px;top:1055.7px;width:80.1px;height:40.9px;background:#263e49"></div>
<div class="hm" style="left:2521.9px;top:1055.7px;width:80.1px;height:40.9px;background:#243a43"></div>
<div class="hm" style="left:2604.6px;top:1055.7px;width:80.1px;height:40.9px;background:#263e49"></div>
<div class="hm" style="left:206.8px;top:1098.6px;width:80.1px;height:40.9px;background:#20303a"></div>
<div class="hm" style="left:289.5px;top:1098.6px;width:80.1px;height:40.9px;background:#243a43"></div>
<div class="hm" style="left:372.2px;top:1098.6px;width:80.1px;height:40.9px;background:#263e49"></div>
<div class="hm" style="left:454.9px;top:1098.6px;width:80.1px;height:40.9px;background:#263e49"></div>
<div class="hm" style="left:537.6px;top:1098.6px;width:80.1px;height:40.9px;background:#243a43"></div>
<div class="hm" style="left:620.2px;top:1098.6px;width:80.1px;height:40.9px;background:#29444f"></div>
<div class="hm" style="left:702.9px;top:1098.6px;width:80.1px;height:40.9px;background:#263e49"></div>
<div class="hm" style="left:785.6px;top:1098.6px;width:80.1px;height:40.9px;background:#22343b"></div>
<div class="hm" style="left:868.3px;top:1098.6px;width:80.1px;height:40.9px;background:#263e49"></div>
<div class="hm" style="left:951.0px;top:1098.6px;width:80.1px;height:40.9px;background:#28424d"></div>
<div class="hm" style="left:1033.7px;top:1098.6px;width:80.1px;height:40.9px;background:#28424d"></div>
<div class="hm" style="left:1116.3px;top:1098.6px;width:80.1px;height:40.9px;background:#263e49"></div>
<div class="hm" style="left:1199.0px;top:1098.6px;width:80.1px;height:40.9px;background:#28424d"></div>
<div class="hm" style="left:1281.7px;top:1098.6px;width:80.1px;height:40.9px;background:#28424d"></div>
<div class="hm" style="left:1364.4px;top:1098.6px;width:80.1px;height:40.9px;background:#22343b"></div>
<div class="hm" style="left:1447.0px;top:1098.6px;width:80.1px;height:40.9px;background:#263e49"></div>
<div class="hm" style="left:1529.7px;top:1098.6px;width:80.1px;height:40.9px;background:#29444f"></div>
<div class="hm" style="left:1612.4px;top:1098.6px;width:80.1px;height:40.9px;background:#29444f"></div>
<div class="hm" style="left:1695.1px;top:1098.6px;width:80.1px;height:40.9px;background:#29444f"></div>
<div class="hm" style="left:1777.8px;top:1098.6px;width:80.1px;height:40.9px;background:#29444f"></div>
<div class="hm" style="left:1860.5px;top:1098.6px;width:80.1px;height:40.9px;background:#263e49"></div>
<div class="hm" style="left:1943.1px;top:1098.6px;width:80.1px;height:40.9px;background:#263e49"></div>
<div class="hm" style="left:2025.8px;top:1098.6px;width:80.1px;height:40.9px;background:#243a43"></div>
<div class="hm" style="left:2108.5px;top:1098.6px;width:80.1px;height:40.9px;background:#263e49"></div>
<div class="hm" style="left:2191.2px;top:1098.6px;width:80.1px;height:40.9px;background:#29444f"></div>
<div class="hm" style="left:2273.8px;top:1098.6px;width:80.1px;height:40.9px;background:#29444f"></div>
<div class="hm" style="left:2356.5px;top:1098.6px;width:80.1px;height:40.9px;background:#29444f"></div>
<div class="hm" style="left:2439.2px;top:1098.6px;width:80.1px;height:40.9px;background:#29444f"></div>
<div class="hm" style="left:2521.9px;top:1098.6px;width:80.1px;height:40.9px;background:#29444f"></div>
<div class="hm" style="left:2604.6px;top:1098.6px;width:80.1px;height:40.9px;background:#29444f"></div>
<div class="hm" style="left:206.8px;top:1141.5px;width:80.1px;height:40.9px;background:#28424d"></div>
<div class="hm" style="left:289.5px;top:1141.5px;width:80.1px;height:40.9px;background:#29444f"></div>
<div class="hm" style="left:372.2px;top:1141.5px;width:80.1px;height:40.9px;background:#29444f"></div>
<div class="hm" style="left:454.9px;top:1141.5px;width:80.1px;height:40.9px;background:#29444f"></div>
<div class="hm" style="left:537.6px;top:1141.5px;width:80.1px;height:40.9px;background:#29444f"></div>
<div class="hm" style="left:620.2px;top:1141.5px;width:80.1px;height:40.9px;background:#2d5060"></div>
<div class="hm" style="left:702.9px;top:1141.5px;width:80.1px;height:40.9px;background:#263e49"></div>
<div class="hm" style="left:785.6px;top:1141.5px;width:80.1px;height:40.9px;background:#263e49"></div>
<div class="hm" style="left:868.3px;top:1141.5px;width:80.1px;height:40.9px;background:#28424d"></div>
<div class="hm" style="left:951.0px;top:1141.5px;width:80.1px;height:40.9px;background:#29444f"></div>
<div class="hm" style="left:1033.7px;top:1141.5px;width:80.1px;height:40.9px;background:#29444f"></div>
<div class="hm" style="left:1116.3px;top:1141.5px;width:80.1px;height:40.9px;background:#29444f"></div>
<div class="hm" style="left:1199.0px;top:1141.5px;width:80.1px;height:40.9px;background:#29444f"></div>
<div class="hm" style="left:1281.7px;top:1141.5px;width:80.1px;height:40.9px;background:#29444f"></div>
<div class="hm" style="left:1364.4px;top:1141.5px;width:80.1px;height:40.9px;background:#263e49"></div>
<div class="hm" style="left:1447.0px;top:1141.5px;width:80.1px;height:40.9px;background:#29444f"></div>
<div class="hm" style="left:1529.7px;top:1141.5px;width:80.1px;height:40.9px;background:#29444f"></div>
<div class="hm" style="left:1612.4px;top:1141.5px;width:80.1px;height:40.9px;background:#29444f"></div>
<div class="hm" style="left:1695.1px;top:1141.5px;width:80.1px;height:40.9px;background:#29444f"></div>
<div class="hm" style="left:1777.8px;top:1141.5px;width:80.1px;height:40.9px;background:#29444f"></div>
<div class="hm" style="left:1860.5px;top:1141.5px;width:80.1px;height:40.9px;background:#29444f"></div>
<div class="hm" style="left:1943.1px;top:1141.5px;width:80.1px;height:40.9px;background:#29444f"></div>
<div class="hm" style="left:2025.8px;top:1141.5px;width:80.1px;height:40.9px;background:#2b4854"></div>
<div class="hm" style="left:2108.5px;top:1141.5px;width:80.1px;height:40.9px;background:#2b4854"></div>
<div class="hm" style="left:2191.2px;top:1141.5px;width:80.1px;height:40.9px;background:#2b4854"></div>
<div class="hm" style="left:2273.8px;top:1141.5px;width:80.1px;height:40.9px;background:#2b4854"></div>
<div class="hm" style="left:2356.5px;top:1141.5px;width:80.1px;height:40.9px;background:#2b4854"></div>
<div class="hm" style="left:2439.2px;top:1141.5px;width:80.1px;height:40.9px;background:#2b4854"></div>
<div class="hm" style="left:2521.9px;top:1141.5px;width:80.1px;height:40.9px;background:#2b4854"></div>
<div class="hm" style="left:2604.6px;top:1141.5px;width:80.1px;height:40.9px;background:#2b4854"></div>
<div class="hm" style="left:206.8px;top:1184.5px;width:80.1px;height:40.9px;background:#28434e"></div>
<div class="hm" style="left:289.5px;top:1184.5px;width:80.1px;height:40.9px;background:#27424d"></div>
<div class="hm" style="left:372.2px;top:1184.5px;width:80.1px;height:40.9px;background:#2a4954"></div>
<div class="hm" style="left:454.9px;top:1184.5px;width:80.1px;height:40.9px;background:#2a4953"></div>
<div class="hm" style="left:537.6px;top:1184.5px;width:80.1px;height:40.9px;background:#2a4a53"></div>
<div class="hm" style="left:620.2px;top:1184.5px;width:80.1px;height:40.9px;background:#2b4e5b"></div>
<div class="hm" style="left:702.9px;top:1184.5px;width:80.1px;height:40.9px;background:#28454f"></div>
<div class="hm" style="left:785.6px;top:1184.5px;width:80.1px;height:40.9px;background:#294650"></div>
<div class="hm" style="left:868.3px;top:1184.5px;width:80.1px;height:40.9px;background:#294752"></div>
<div class="hm" style="left:951.0px;top:1184.5px;width:80.1px;height:40.9px;background:#2a4b56"></div>
<div class="hm" style="left:1033.7px;top:1184.5px;width:80.1px;height:40.9px;background:#294852"></div>
<div class="hm" style="left:1116.3px;top:1184.5px;width:80.1px;height:40.9px;background:#28454f"></div>
<div class="hm" style="left:1199.0px;top:1184.5px;width:80.1px;height:40.9px;background:#2a4a55"></div>
<div class="hm" style="left:1281.7px;top:1184.5px;width:80.1px;height:40.9px;background:#294852"></div>
<div class="hm" style="left:1364.4px;top:1184.5px;width:80.1px;height:40.9px;background:#294650"></div>
<div class="hm" style="left:1447.0px;top:1184.5px;width:80.1px;height:40.9px;background:#2a4b56"></div>
<div class="hm" style="left:1529.7px;top:1184.5px;width:80.1px;height:40.9px;background:#2a4b56"></div>
<div class="hm" style="left:1612.4px;top:1184.5px;width:80.1px;height:40.9px;background:#2a4b56"></div>
<div class="hm" style="left:1695.1px;top:1184.5px;width:80.1px;height:40.9px;background:#2a4b56"></div>
<div class="hm" style="left:1777.8px;top:1184.5px;width:80.1px;height:40.9px;background:#2a4b56"></div>
<div class="hm" style="left:1860.5px;top:1184.5px;width:80.1px;height:40.9px;background:#2b4b57"></div>
<div class="hm" style="left:1943.1px;top:1184.5px;width:80.1px;height:40.9px;background:#2a4852"></div>
<div class="hm" style="left:2025.8px;top:1184.5px;width:80.1px;height:40.9px;background:#2a4a55"></div>
<div class="hm" style="left:2108.5px;top:1184.5px;width:80.1px;height:40.9px;background:#2b4c59"></div>
<div class="hm" style="left:2191.2px;top:1184.5px;width:80.1px;height:40.9px;background:#2b4d5a"></div>
<div class="hm" style="left:2273.8px;top:1184.5px;width:80.1px;height:40.9px;background:#2a4d58"></div>
<div class="hm" style="left:2356.5px;top:1184.5px;width:80.1px;height:40.9px;background:#2c5060"></div>
<div class="hm" style="left:2439.2px;top:1184.5px;width:80.1px;height:40.9px;background:#2c5060"></div>
<div class="hm" style="left:2521.9px;top:1184.5px;width:80.1px;height:40.9px;background:#2c4f5e"></div>
<div class="hm" style="left:2604.6px;top:1184.5px;width:80.1px;height:40.9px;background:#2c4f5e"></div>
<div class="hm" style="left:206.8px;top:1227.5px;width:80.1px;height:40.9px;background:#2a4a55"></div>
<div class="hm" style="left:289.5px;top:1227.5px;width:80.1px;height:40.9px;background:#2a4a56"></div>
<div class="hm" style="left:372.2px;top:1227.5px;width:80.1px;height:40.9px;background:#2c4f5d"></div>
<div class="hm" style="left:454.9px;top:1227.5px;width:80.1px;height:40.9px;background:#2d4f61"></div>
<div class="hm" style="left:537.6px;top:1227.5px;width:80.1px;height:40.9px;background:#2c4f60"></div>
<div class="hm" style="left:620.2px;top:1227.5px;width:80.1px;height:40.9px;background:#2d5060"></div>
<div class="hm" style="left:702.9px;top:1227.5px;width:80.1px;height:40.9px;background:#2b4b57"></div>
<div class="hm" style="left:785.6px;top:1227.5px;width:80.1px;height:40.9px;background:#2b4d58"></div>
<div class="hm" style="left:868.3px;top:1227.5px;width:80.1px;height:40.9px;background:#2b4d5a"></div>
<div class="hm" style="left:951.0px;top:1227.5px;width:80.1px;height:40.9px;background:#2c4f60"></div>
<div class="hm" style="left:1033.7px;top:1227.5px;width:80.1px;height:40.9px;background:#2c4c5e"></div>
<div class="hm" style="left:1116.3px;top:1227.5px;width:80.1px;height:40.9px;background:#2a4a55"></div>
<div class="hm" style="left:1199.0px;top:1227.5px;width:80.1px;height:40.9px;background:#2d4f61"></div>
<div class="hm" style="left:1281.7px;top:1227.5px;width:80.1px;height:40.9px;background:#2a4b57"></div>
<div class="hm" style="left:1364.4px;top:1227.5px;width:80.1px;height:40.9px;background:#2b4b57"></div>
<div class="hm" style="left:1447.0px;top:1227.5px;width:80.1px;height:40.9px;background:#2c4e5c"></div>
<div class="hm" style="left:1529.7px;top:1227.5px;width:80.1px;height:40.9px;background:#2c4e5c"></div>
<div class="hm" style="left:1612.4px;top:1227.5px;width:80.1px;height:40.9px;background:#2c4e5c"></div>
<div class="hm" style="left:1695.1px;top:1227.5px;width:80.1px;height:40.9px;background:#2c4e5c"></div>
<div class="hm" style="left:1777.8px;top:1227.5px;width:80.1px;height:40.9px;background:#2c4e5c"></div>
<div class="hm" style="left:1860.5px;top:1227.5px;width:80.1px;height:40.9px;background:#2b4e5f"></div>
<div class="hm" style="left:1943.1px;top:1227.5px;width:80.1px;height:40.9px;background:#2c4e5e"></div>
<div class="hm" style="left:2025.8px;top:1227.5px;width:80.1px;height:40.9px;background:#2a4b57"></div>
<div class="hm" style="left:2108.5px;top:1227.5px;width:80.1px;height:40.9px;background:#2d5061"></div>
<div class="hm" style="left:2191.2px;top:1227.5px;width:80.1px;height:40.9px;background:#2c4f60"></div>
<div class="hm" style="left:2273.8px;top:1227.5px;width:80.1px;height:40.9px;background:#2e5465"></div>
<div class="hm" style="left:2356.5px;top:1227.5px;width:80.1px;height:40.9px;background:#305767"></div>
<div class="hm" style="left:2439.2px;top:1227.5px;width:80.1px;height:40.9px;background:#305767"></div>
<div class="hm" style="left:2521.9px;top:1227.5px;width:80.1px;height:40.9px;background:#305767"></div>
<div class="hm" style="left:2604.6px;top:1227.5px;width:80.1px;height:40.9px;background:#305767"></div>
<div class="hm" style="left:206.8px;top:1270.4px;width:80.1px;height:40.9px;background:#2c4c58"></div>
<div class="hm" style="left:289.5px;top:1270.4px;width:80.1px;height:40.9px;background:#2e4f62"></div>
<div class="hm" style="left:372.2px;top:1270.4px;width:80.1px;height:40.9px;background:#2f5466"></div>
<div class="hm" style="left:454.9px;top:1270.4px;width:80.1px;height:40.9px;background:#2f5466"></div>
<div class="hm" style="left:537.6px;top:1270.4px;width:80.1px;height:40.9px;background:#2f5466"></div>
<div class="hm" style="left:620.2px;top:1270.4px;width:80.1px;height:40.9px;background:#305869"></div>
<div class="hm" style="left:702.9px;top:1270.4px;width:80.1px;height:40.9px;background:#305567"></div>
<div class="hm" style="left:785.6px;top:1270.4px;width:80.1px;height:40.9px;background:#305666"></div>
<div class="hm" style="left:868.3px;top:1270.4px;width:80.1px;height:40.9px;background:#2f5465"></div>
<div class="hm" style="left:951.0px;top:1270.4px;width:80.1px;height:40.9px;background:#305667"></div>
<div class="hm" style="left:1033.7px;top:1270.4px;width:80.1px;height:40.9px;background:#2e5263"></div>
<div class="hm" style="left:1116.3px;top:1270.4px;width:80.1px;height:40.9px;background:#2f5365"></div>
<div class="hm" style="left:1199.0px;top:1270.4px;width:80.1px;height:40.9px;background:#2f5466"></div>
<div class="hm" style="left:1281.7px;top:1270.4px;width:80.1px;height:40.9px;background:#2f5466"></div>
<div class="hm" style="left:1364.4px;top:1270.4px;width:80.1px;height:40.9px;background:#305667"></div>
<div class="hm" style="left:1447.0px;top:1270.4px;width:80.1px;height:40.9px;background:#305668"></div>
<div class="hm" style="left:1529.7px;top:1270.4px;width:80.1px;height:40.9px;background:#305668"></div>
<div class="hm" style="left:1612.4px;top:1270.4px;width:80.1px;height:40.9px;background:#305668"></div>
<div class="hm" style="left:1695.1px;top:1270.4px;width:80.1px;height:40.9px;background:#305668"></div>
<div class="hm" style="left:1777.8px;top:1270.4px;width:80.1px;height:40.9px;background:#305668"></div>
<div class="hm" style="left:1860.5px;top:1270.4px;width:80.1px;height:40.9px;background:#2f5466"></div>
<div class="hm" style="left:1943.1px;top:1270.4px;width:80.1px;height:40.9px;background:#2f5466"></div>
<div class="hm" style="left:2025.8px;top:1270.4px;width:80.1px;height:40.9px;background:#2e5264"></div>
<div class="hm" style="left:2108.5px;top:1270.4px;width:80.1px;height:40.9px;background:#305667"></div>
<div class="hm" style="left:2191.2px;top:1270.4px;width:80.1px;height:40.9px;background:#305667"></div>
<div class="hm" style="left:2273.8px;top:1270.4px;width:80.1px;height:40.9px;background:#325a6b"></div>
<div class="hm" style="left:2356.5px;top:1270.4px;width:80.1px;height:40.9px;background:#335c6e"></div>
<div class="hm" style="left:2439.2px;top:1270.4px;width:80.1px;height:40.9px;background:#345c6e"></div>
<div class="hm" style="left:2521.9px;top:1270.4px;width:80.1px;height:40.9px;background:#335b6c"></div>
<div class="hm" style="left:2604.6px;top:1270.4px;width:80.1px;height:40.9px;background:#325a6b"></div>
<div class="hm" style="left:206.8px;top:1313.3px;width:80.1px;height:40.9px;background:#315a6b"></div>
<div class="hm" style="left:289.5px;top:1313.3px;width:80.1px;height:40.9px;background:#315a6c"></div>
<div class="hm" style="left:372.2px;top:1313.3px;width:80.1px;height:40.9px;background:#335c6e"></div>
<div class="hm" style="left:454.9px;top:1313.3px;width:80.1px;height:40.9px;background:#325c6e"></div>
<div class="hm" style="left:537.6px;top:1313.3px;width:80.1px;height:40.9px;background:#325d6f"></div>
<div class="hm" style="left:620.2px;top:1313.3px;width:80.1px;height:40.9px;background:#335d6f"></div>
<div class="hm" style="left:702.9px;top:1313.3px;width:80.1px;height:40.9px;background:#335d6f"></div>
<div class="hm" style="left:785.6px;top:1313.3px;width:80.1px;height:40.9px;background:#335c6e"></div>
<div class="hm" style="left:868.3px;top:1313.3px;width:80.1px;height:40.9px;background:#335c6e"></div>
<div class="hm" style="left:951.0px;top:1313.3px;width:80.1px;height:40.9px;background:#345d6f"></div>
<div class="hm" style="left:1033.7px;top:1313.3px;width:80.1px;height:40.9px;background:#325b6d"></div>
<div class="hm" style="left:1116.3px;top:1313.3px;width:80.1px;height:40.9px;background:#325b6d"></div>
<div class="hm" style="left:1199.0px;top:1313.3px;width:80.1px;height:40.9px;background:#335c6e"></div>
<div class="hm" style="left:1281.7px;top:1313.3px;width:80.1px;height:40.9px;background:#335d6e"></div>
<div class="hm" style="left:1364.4px;top:1313.3px;width:80.1px;height:40.9px;background:#335d6f"></div>
<div class="hm" style="left:1447.0px;top:1313.3px;width:80.1px;height:40.9px;background:#345e70"></div>
<div class="hm" style="left:1529.7px;top:1313.3px;width:80.1px;height:40.9px;background:#345e70"></div>
<div class="hm" style="left:1612.4px;top:1313.3px;width:80.1px;height:40.9px;background:#345e70"></div>
<div class="hm" style="left:1695.1px;top:1313.3px;width:80.1px;height:40.9px;background:#345e70"></div>
<div class="hm" style="left:1777.8px;top:1313.3px;width:80.1px;height:40.9px;background:#345e70"></div>
<div class="hm" style="left:1860.5px;top:1313.3px;width:80.1px;height:40.9px;background:#325b6d"></div>
<div class="hm" style="left:1943.1px;top:1313.3px;width:80.1px;height:40.9px;background:#325b6d"></div>
<div class="hm" style="left:2025.8px;top:1313.3px;width:80.1px;height:40.9px;background:#325b6d"></div>
<div class="hm" style="left:2108.5px;top:1313.3px;width:80.1px;height:40.9px;background:#345d6f"></div>
<div class="hm" style="left:2191.2px;top:1313.3px;width:80.1px;height:40.9px;background:#345e70"></div>
<div class="hm" style="left:2273.8px;top:1313.3px;width:80.1px;height:40.9px;background:#345e70"></div>
<div class="hm" style="left:2356.5px;top:1313.3px;width:80.1px;height:40.9px;background:#365f72"></div>
<div class="hm" style="left:2439.2px;top:1313.3px;width:80.1px;height:40.9px;background:#376173"></div>
<div class="hm" style="left:2521.9px;top:1313.3px;width:80.1px;height:40.9px;background:#345e70"></div>
<div class="hm" style="left:2604.6px;top:1313.3px;width:80.1px;height:40.9px;background:#345e70"></div>
<div class="hm" style="left:206.8px;top:1356.3px;width:80.1px;height:40.9px;background:#366273"></div>
<div class="hm" style="left:289.5px;top:1356.3px;width:80.1px;height:40.9px;background:#376275"></div>
<div class="hm" style="left:372.2px;top:1356.3px;width:80.1px;height:40.9px;background:#386476"></div>
<div class="hm" style="left:454.9px;top:1356.3px;width:80.1px;height:40.9px;background:#376274"></div>
<div class="hm" style="left:537.6px;top:1356.3px;width:80.1px;height:40.9px;background:#376476"></div>
<div class="hm" style="left:620.2px;top:1356.3px;width:80.1px;height:40.9px;background:#386475"></div>
<div class="hm" style="left:702.9px;top:1356.3px;width:80.1px;height:40.9px;background:#386476"></div>
<div class="hm" style="left:785.6px;top:1356.3px;width:80.1px;height:40.9px;background:#386577"></div>
<div class="hm" style="left:868.3px;top:1356.3px;width:80.1px;height:40.9px;background:#376476"></div>
<div class="hm" style="left:951.0px;top:1356.3px;width:80.1px;height:40.9px;background:#386576"></div>
<div class="hm" style="left:1033.7px;top:1356.3px;width:80.1px;height:40.9px;background:#376275"></div>
<div class="hm" style="left:1116.3px;top:1356.3px;width:80.1px;height:40.9px;background:#386476"></div>
<div class="hm" style="left:1199.0px;top:1356.3px;width:80.1px;height:40.9px;background:#386577"></div>
<div class="hm" style="left:1281.7px;top:1356.3px;width:80.1px;height:40.9px;background:#386476"></div>
<div class="hm" style="left:1364.4px;top:1356.3px;width:80.1px;height:40.9px;background:#376476"></div>
<div class="hm" style="left:1447.0px;top:1356.3px;width:80.1px;height:40.9px;background:#386577"></div>
<div class="hm" style="left:1529.7px;top:1356.3px;width:80.1px;height:40.9px;background:#386577"></div>
<div class="hm" style="left:1612.4px;top:1356.3px;width:80.1px;height:40.9px;background:#386577"></div>
<div class="hm" style="left:1695.1px;top:1356.3px;width:80.1px;height:40.9px;background:#386577"></div>
<div class="hm" style="left:1777.8px;top:1356.3px;width:80.1px;height:40.9px;background:#386577"></div>
<div class="hm" style="left:1860.5px;top:1356.3px;width:80.1px;height:40.9px;background:#366376"></div>
<div class="hm" style="left:1943.1px;top:1356.3px;width:80.1px;height:40.9px;background:#376476"></div>
<div class="hm" style="left:2025.8px;top:1356.3px;width:80.1px;height:40.9px;background:#386577"></div>
<div class="hm" style="left:2108.5px;top:1356.3px;width:80.1px;height:40.9px;background:#386476"></div>
<div class="hm" style="left:2191.2px;top:1356.3px;width:80.1px;height:40.9px;background:#376678"></div>
<div class="hm" style="left:2273.8px;top:1356.3px;width:80.1px;height:40.9px;background:#386679"></div>
<div class="hm" style="left:2356.5px;top:1356.3px;width:80.1px;height:40.9px;background:#3b6a7d"></div>
<div class="hm" style="left:2439.2px;top:1356.3px;width:80.1px;height:40.9px;background:#3c6c7e"></div>
<div class="hm" style="left:2521.9px;top:1356.3px;width:80.1px;height:40.9px;background:#3b6a7d"></div>
<div class="hm" style="left:2604.6px;top:1356.3px;width:80.1px;height:40.9px;background:#3a697b"></div>
<div class="hm" style="left:206.8px;top:1399.2px;width:80.1px;height:40.9px;background:#3d6e82"></div>
<div class="hm" style="left:289.5px;top:1399.2px;width:80.1px;height:40.9px;background:#3e7085"></div>
<div class="hm" style="left:372.2px;top:1399.2px;width:80.1px;height:40.9px;background:#3e7085"></div>
<div class="hm" style="left:454.9px;top:1399.2px;width:80.1px;height:40.9px;background:#3e7085"></div>
<div class="hm" style="left:537.6px;top:1399.2px;width:80.1px;height:40.9px;background:#3e7085"></div>
<div class="hm" style="left:620.2px;top:1399.2px;width:80.1px;height:40.9px;background:#3e7286"></div>
<div class="hm" style="left:702.9px;top:1399.2px;width:80.1px;height:40.9px;background:#3e7286"></div>
<div class="hm" style="left:785.6px;top:1399.2px;width:80.1px;height:40.9px;background:#3e7286"></div>
<div class="hm" style="left:868.3px;top:1399.2px;width:80.1px;height:40.9px;background:#3e7085"></div>
<div class="hm" style="left:951.0px;top:1399.2px;width:80.1px;height:40.9px;background:#3e7286"></div>
<div class="hm" style="left:1033.7px;top:1399.2px;width:80.1px;height:40.9px;background:#3d6f84"></div>
<div class="hm" style="left:1116.3px;top:1399.2px;width:80.1px;height:40.9px;background:#3e7085"></div>
<div class="hm" style="left:1199.0px;top:1399.2px;width:80.1px;height:40.9px;background:#3e7186"></div>
<div class="hm" style="left:1281.7px;top:1399.2px;width:80.1px;height:40.9px;background:#3e7085"></div>
<div class="hm" style="left:1364.4px;top:1399.2px;width:80.1px;height:40.9px;background:#3e7286"></div>
<div class="hm" style="left:1447.0px;top:1399.2px;width:80.1px;height:40.9px;background:#3e7286"></div>
<div class="hm" style="left:1529.7px;top:1399.2px;width:80.1px;height:40.9px;background:#3e7286"></div>
<div class="hm" style="left:1612.4px;top:1399.2px;width:80.1px;height:40.9px;background:#3e7286"></div>
<div class="hm" style="left:1695.1px;top:1399.2px;width:80.1px;height:40.9px;background:#3e7286"></div>
<div class="hm" style="left:1777.8px;top:1399.2px;width:80.1px;height:40.9px;background:#3e7286"></div>
<div class="hm" style="left:1860.5px;top:1399.2px;width:80.1px;height:40.9px;background:#3d7085"></div>
<div class="hm" style="left:1943.1px;top:1399.2px;width:80.1px;height:40.9px;background:#3e7186"></div>
<div class="hm" style="left:2025.8px;top:1399.2px;width:80.1px;height:40.9px;background:#3e7085"></div>
<div class="hm" style="left:2108.5px;top:1399.2px;width:80.1px;height:40.9px;background:#3e7287"></div>
<div class="hm" style="left:2191.2px;top:1399.2px;width:80.1px;height:40.9px;background:#3e7287"></div>
<div class="hm" style="left:2273.8px;top:1399.2px;width:80.1px;height:40.9px;background:#3e7287"></div>
<div class="hm" style="left:2356.5px;top:1399.2px;width:80.1px;height:40.9px;background:#3f7388"></div>
<div class="hm" style="left:2439.2px;top:1399.2px;width:80.1px;height:40.9px;background:#407489"></div>
<div class="hm" style="left:2521.9px;top:1399.2px;width:80.1px;height:40.9px;background:#3e7287"></div>
<div class="hm" style="left:2604.6px;top:1399.2px;width:80.1px;height:40.9px;background:#3e7287"></div>
<div class="hm" style="left:206.8px;top:1442.2px;width:80.1px;height:40.9px;background:#6ac5e9"></div>
<div class="hm" style="left:289.5px;top:1442.2px;width:80.1px;height:40.9px;background:#6bc7ea"></div>
<div class="hm" style="left:372.2px;top:1442.2px;width:80.1px;height:40.9px;background:#6ccbf0"></div>
<div class="hm" style="left:454.9px;top:1442.2px;width:80.1px;height:40.9px;background:#69c3e8"></div>
<div class="hm" style="left:537.6px;top:1442.2px;width:80.1px;height:40.9px;background:#66bde0"></div>
<div class="hm" style="left:620.2px;top:1442.2px;width:80.1px;height:40.9px;background:#66bde0"></div>
<div class="hm" style="left:702.9px;top:1442.2px;width:80.1px;height:40.9px;background:#62b8da"></div>
<div class="hm" style="left:785.6px;top:1442.2px;width:80.1px;height:40.9px;background:#5eb3d6"></div>
<div class="hm" style="left:868.3px;top:1442.2px;width:80.1px;height:40.9px;background:#62b8dd"></div>
<div class="hm" style="left:951.0px;top:1442.2px;width:80.1px;height:40.9px;background:#66c0e4"></div>
<div class="hm" style="left:1033.7px;top:1442.2px;width:80.1px;height:40.9px;background:#66c1e6"></div>
<div class="hm" style="left:1116.3px;top:1442.2px;width:80.1px;height:40.9px;background:#66c1e6"></div>
<div class="hm" style="left:1199.0px;top:1442.2px;width:80.1px;height:40.9px;background:#69c7ee"></div>
<div class="hm" style="left:1281.7px;top:1442.2px;width:80.1px;height:40.9px;background:#66c2e6"></div>
<div class="hm" style="left:1364.4px;top:1442.2px;width:80.1px;height:40.9px;background:#64bde2"></div>
<div class="hm" style="left:1447.0px;top:1442.2px;width:80.1px;height:40.9px;background:#66c2e8"></div>
<div class="hm" style="left:1529.7px;top:1442.2px;width:80.1px;height:40.9px;background:#66c2e8"></div>
<div class="hm" style="left:1612.4px;top:1442.2px;width:80.1px;height:40.9px;background:#66c2e8"></div>
<div class="hm" style="left:1695.1px;top:1442.2px;width:80.1px;height:40.9px;background:#66c2e8"></div>
<div class="hm" style="left:1777.8px;top:1442.2px;width:80.1px;height:40.9px;background:#66c2e8"></div>
<div class="hm" style="left:1860.5px;top:1442.2px;width:80.1px;height:40.9px;background:#6ccbef"></div>
<div class="hm" style="left:1943.1px;top:1442.2px;width:80.1px;height:40.9px;background:#6cc9ee"></div>
<div class="hm" style="left:2025.8px;top:1442.2px;width:80.1px;height:40.9px;background:#6ac7ec"></div>
<div class="hm" style="left:2108.5px;top:1442.2px;width:80.1px;height:40.9px;background:#70d4fa"></div>
<div class="hm" style="left:2191.2px;top:1442.2px;width:80.1px;height:40.9px;background:#70d4fa"></div>
<div class="hm" style="left:2273.8px;top:1442.2px;width:80.1px;height:40.9px;background:#6fd2f8"></div>
<div class="hm" style="left:2356.5px;top:1442.2px;width:80.1px;height:40.9px;background:#6ccbf0"></div>
<div class="hm" style="left:2439.2px;top:1442.2px;width:80.1px;height:40.9px;background:#6ac8ee"></div>
<div class="hm" style="left:2521.9px;top:1442.2px;width:80.1px;height:40.9px;background:#6ccbf0"></div>
<div class="hm" style="left:2604.6px;top:1442.2px;width:80.1px;height:40.9px;background:#6ac7ec"></div>
<div class="hm" style="left:206.8px;top:1485.2px;width:80.1px;height:40.9px;background:#5193ac"></div>
<div class="hm" style="left:289.5px;top:1485.2px;width:80.1px;height:40.9px;background:#4e8ea6"></div>
<div class="hm" style="left:372.2px;top:1485.2px;width:80.1px;height:40.9px;background:#4e8ea6"></div>
<div class="hm" style="left:454.9px;top:1485.2px;width:80.1px;height:40.9px;background:#5094ad"></div>
<div class="hm" style="left:537.6px;top:1485.2px;width:80.1px;height:40.9px;background:#549bb5"></div>
<div class="hm" style="left:620.2px;top:1485.2px;width:80.1px;height:40.9px;background:#59a5c0"></div>
<div class="hm" style="left:702.9px;top:1485.2px;width:80.1px;height:40.9px;background:#5caac6"></div>
<div class="hm" style="left:785.6px;top:1485.2px;width:80.1px;height:40.9px;background:#5eafcc"></div>
<div class="hm" style="left:868.3px;top:1485.2px;width:80.1px;height:40.9px;background:#5aa8c5"></div>
<div class="hm" style="left:951.0px;top:1485.2px;width:80.1px;height:40.9px;background:#59a6c2"></div>
<div class="hm" style="left:1033.7px;top:1485.2px;width:80.1px;height:40.9px;background:#5aa5c0"></div>
<div class="hm" style="left:1116.3px;top:1485.2px;width:80.1px;height:40.9px;background:#5aa6c2"></div>
<div class="hm" style="left:1199.0px;top:1485.2px;width:80.1px;height:40.9px;background:#5aa6c2"></div>
<div class="hm" style="left:1281.7px;top:1485.2px;width:80.1px;height:40.9px;background:#5aa6c2"></div>
<div class="hm" style="left:1364.4px;top:1485.2px;width:80.1px;height:40.9px;background:#549ebb"></div>
<div class="hm" style="left:1447.0px;top:1485.2px;width:80.1px;height:40.9px;background:#59a5c2"></div>
<div class="hm" style="left:1529.7px;top:1485.2px;width:80.1px;height:40.9px;background:#59a5c2"></div>
<div class="hm" style="left:1612.4px;top:1485.2px;width:80.1px;height:40.9px;background:#59a5c2"></div>
<div class="hm" style="left:1695.1px;top:1485.2px;width:80.1px;height:40.9px;background:#59a5c2"></div>
<div class="hm" style="left:1777.8px;top:1485.2px;width:80.1px;height:40.9px;background:#59a5c2"></div>
<div class="hm" style="left:1860.5px;top:1485.2px;width:80.1px;height:40.9px;background:#5094ad"></div>
<div class="hm" style="left:1943.1px;top:1485.2px;width:80.1px;height:40.9px;background:#4e8ea6"></div>
<div class="hm" style="left:2025.8px;top:1485.2px;width:80.1px;height:40.9px;background:#539bb5"></div>
<div class="hm" style="left:2108.5px;top:1485.2px;width:80.1px;height:40.9px;background:#5094ad"></div>
<div class="hm" style="left:2191.2px;top:1485.2px;width:80.1px;height:40.9px;background:#4e90a9"></div>
<div class="hm" style="left:2273.8px;top:1485.2px;width:80.1px;height:40.9px;background:#4a88a0"></div>
<div class="hm" style="left:2356.5px;top:1485.2px;width:80.1px;height:40.9px;background:#457f96"></div>
<div class="hm" style="left:2439.2px;top:1485.2px;width:80.1px;height:40.9px;background:#457f96"></div>
<div class="hm" style="left:2521.9px;top:1485.2px;width:80.1px;height:40.9px;background:#457f96"></div>
<div class="hm" style="left:2604.6px;top:1485.2px;width:80.1px;height:40.9px;background:#467f95"></div>
<div class="hm" style="left:206.8px;top:1528.1px;width:80.1px;height:40.9px;background:#29434f"></div>
<div class="hm" style="left:289.5px;top:1528.1px;width:80.1px;height:40.9px;background:#273e4a"></div>
<div class="hm" style="left:372.2px;top:1528.1px;width:80.1px;height:40.9px;background:#2b4b57"></div>
<div class="hm" style="left:454.9px;top:1528.1px;width:80.1px;height:40.9px;background:#2b4b58"></div>
<div class="hm" style="left:537.6px;top:1528.1px;width:80.1px;height:40.9px;background:#2c4d5f"></div>
<div class="hm" style="left:620.2px;top:1528.1px;width:80.1px;height:40.9px;background:#2d5061"></div>
<div class="hm" style="left:702.9px;top:1528.1px;width:80.1px;height:40.9px;background:#2a4250"></div>
<div class="hm" style="left:785.6px;top:1528.1px;width:80.1px;height:40.9px;background:#2a4752"></div>
<div class="hm" style="left:868.3px;top:1528.1px;width:80.1px;height:40.9px;background:#2a4652"></div>
<div class="hm" style="left:951.0px;top:1528.1px;width:80.1px;height:40.9px;background:#2a4853"></div>
<div class="hm" style="left:1033.7px;top:1528.1px;width:80.1px;height:40.9px;background:#294450"></div>
<div class="hm" style="left:1116.3px;top:1528.1px;width:80.1px;height:40.9px;background:#284350"></div>
<div class="hm" style="left:1199.0px;top:1528.1px;width:80.1px;height:40.9px;background:#2a4853"></div>
<div class="hm" style="left:1281.7px;top:1528.1px;width:80.1px;height:40.9px;background:#294652"></div>
<div class="hm" style="left:1364.4px;top:1528.1px;width:80.1px;height:40.9px;background:#28434f"></div>
<div class="hm" style="left:1447.0px;top:1528.1px;width:80.1px;height:40.9px;background:#2a4853"></div>
<div class="hm" style="left:1529.7px;top:1528.1px;width:80.1px;height:40.9px;background:#2a4853"></div>
<div class="hm" style="left:1612.4px;top:1528.1px;width:80.1px;height:40.9px;background:#2a4853"></div>
<div class="hm" style="left:1695.1px;top:1528.1px;width:80.1px;height:40.9px;background:#2a4853"></div>
<div class="hm" style="left:1777.8px;top:1528.1px;width:80.1px;height:40.9px;background:#2a4853"></div>
<div class="hm" style="left:1860.5px;top:1528.1px;width:80.1px;height:40.9px;background:#2a4753"></div>
<div class="hm" style="left:1943.1px;top:1528.1px;width:80.1px;height:40.9px;background:#263f4a"></div>
<div class="hm" style="left:2025.8px;top:1528.1px;width:80.1px;height:40.9px;background:#263f4a"></div>
<div class="hm" style="left:2108.5px;top:1528.1px;width:80.1px;height:40.9px;background:#284550"></div>
<div class="hm" style="left:2191.2px;top:1528.1px;width:80.1px;height:40.9px;background:#2a4a54"></div>
<div class="hm" style="left:2273.8px;top:1528.1px;width:80.1px;height:40.9px;background:#294550"></div>
<div class="hm" style="left:2356.5px;top:1528.1px;width:80.1px;height:40.9px;background:#28434f"></div>
<div class="hm" style="left:2439.2px;top:1528.1px;width:80.1px;height:40.9px;background:#29454f"></div>
<div class="hm" style="left:2521.9px;top:1528.1px;width:80.1px;height:40.9px;background:#233840"></div>
<div class="hm" style="left:2604.6px;top:1528.1px;width:80.1px;height:40.9px;background:#253d47"></div>
<div class="hm" style="left:206.8px;top:1571.1px;width:80.1px;height:40.9px;background:#1f2d35"></div>
<div class="hm" style="left:289.5px;top:1571.1px;width:80.1px;height:40.9px;background:#20303a"></div>
<div class="hm" style="left:372.2px;top:1571.1px;width:80.1px;height:40.9px;background:#243b45"></div>
<div class="hm" style="left:454.9px;top:1571.1px;width:80.1px;height:40.9px;background:#243b45"></div>
<div class="hm" style="left:537.6px;top:1571.1px;width:80.1px;height:40.9px;background:#253f49"></div>
<div class="hm" style="left:620.2px;top:1571.1px;width:80.1px;height:40.9px;background:#253e48"></div>
<div class="hm" style="left:702.9px;top:1571.1px;width:80.1px;height:40.9px;background:#1e2a30"></div>
<div class="hm" style="left:785.6px;top:1571.1px;width:80.1px;height:40.9px;background:#1e282e"></div>
<div class="hm" style="left:868.3px;top:1571.1px;width:80.1px;height:40.9px;background:#233840"></div>
<div class="hm" style="left:951.0px;top:1571.1px;width:80.1px;height:40.9px;background:#253e48"></div>
<div class="hm" style="left:1033.7px;top:1571.1px;width:80.1px;height:40.9px;background:#253e48"></div>
<div class="hm" style="left:1116.3px;top:1571.1px;width:80.1px;height:40.9px;background:#243c46"></div>
<div class="hm" style="left:1199.0px;top:1571.1px;width:80.1px;height:40.9px;background:#243c46"></div>
<div class="hm" style="left:1281.7px;top:1571.1px;width:80.1px;height:40.9px;background:#253d48"></div>
<div class="hm" style="left:1364.4px;top:1571.1px;width:80.1px;height:40.9px;background:#1e2a30"></div>
<div class="hm" style="left:1447.0px;top:1571.1px;width:80.1px;height:40.9px;background:#253e48"></div>
<div class="hm" style="left:1529.7px;top:1571.1px;width:80.1px;height:40.9px;background:#253e48"></div>
<div class="hm" style="left:1612.4px;top:1571.1px;width:80.1px;height:40.9px;background:#253e48"></div>
<div class="hm" style="left:1695.1px;top:1571.1px;width:80.1px;height:40.9px;background:#253e48"></div>
<div class="hm" style="left:1777.8px;top:1571.1px;width:80.1px;height:40.9px;background:#253e48"></div>
<div class="hm" style="left:1860.5px;top:1571.1px;width:80.1px;height:40.9px;background:#223640"></div>
<div class="hm" style="left:1943.1px;top:1571.1px;width:80.1px;height:40.9px;background:#1a1f22"></div>
<div class="hm" style="left:2025.8px;top:1571.1px;width:80.1px;height:40.9px;background:#1e2a30"></div>
<div class="hm" style="left:2108.5px;top:1571.1px;width:80.1px;height:40.9px;background:#233840"></div>
<div class="hm" style="left:2191.2px;top:1571.1px;width:80.1px;height:40.9px;background:#233840"></div>
<div class="hm" style="left:2273.8px;top:1571.1px;width:80.1px;height:40.9px;background:#233840"></div>
<div class="hm" style="left:2356.5px;top:1571.1px;width:80.1px;height:40.9px;background:#253d47"></div>
<div class="hm" style="left:2439.2px;top:1571.1px;width:80.1px;height:40.9px;background:#233840"></div>
<div class="hm" style="left:2521.9px;top:1571.1px;width:80.1px;height:40.9px;background:#1e2a30"></div>
<div class="hm" style="left:2604.6px;top:1571.1px;width:80.1px;height:40.9px;background:#233840"></div>
<div class="a" style="left:1363.5px;top:1441px;width:83px;height:43.5px;border:2.2px solid #b3b6b9;border-radius:4px"></div>
<div class="a" style="left:126px;top:1614px;width:2574px;height:2px;background:#40464d"></div>
<div class="tk" style="left:185.6px"></div>
<div class="xl" style="left:125.6px;top:1632.6px">Aug 16,</div>
<div class="xl" style="left:126.0px;top:1652.3px">2025</div>
<div class="tk" style="left:350.8px"></div>
<div class="xl" style="left:290.8px;top:1632.6px">Aug 18,</div>
<div class="xl" style="left:291.2px;top:1652.3px">2025</div>
<div class="tk" style="left:516.0px"></div>
<div class="xl" style="left:456.0px;top:1632.6px">Aug 20,</div>
<div class="xl" style="left:456.4px;top:1652.3px">2025</div>
<div class="tk" style="left:681.2px"></div>
<div class="xl" style="left:621.2px;top:1632.6px">Aug 22,</div>
<div class="xl" style="left:621.6px;top:1652.3px">2025</div>
<div class="tk" style="left:846.4px"></div>
<div class="xl" style="left:786.4px;top:1632.6px">Aug 24,</div>
<div class="xl" style="left:786.8px;top:1652.3px">2025</div>
<div class="tk" style="left:1011.6px"></div>
<div class="xl" style="left:951.6px;top:1632.6px">Aug 26,</div>
<div class="xl" style="left:952.0px;top:1652.3px">2025</div>
<div class="tk" style="left:1176.8px"></div>
<div class="xl" style="left:1116.8px;top:1632.6px">Aug 28,</div>
<div class="xl" style="left:1117.2px;top:1652.3px">2025</div>
<div class="tk" style="left:1342.0px"></div>
<div class="xl" style="left:1282.0px;top:1632.6px">Aug 30,</div>
<div class="xl" style="left:1282.4px;top:1652.3px">2025</div>
<div class="tk" style="left:1507.2px"></div>
<div class="xl" style="left:1447.2px;top:1632.6px">Sep 01,</div>
<div class="xl" style="left:1447.6px;top:1652.3px">2025</div>
<div class="tk" style="left:1672.4px"></div>
<div class="xl" style="left:1612.4px;top:1632.6px">Sep 03,</div>
<div class="xl" style="left:1612.8px;top:1652.3px">2025</div>
<div class="tk" style="left:1837.6px"></div>
<div class="xl" style="left:1777.6px;top:1632.6px">Sep 05,</div>
<div class="xl" style="left:1778.0px;top:1652.3px">2025</div>
<div class="tk" style="left:2002.8px"></div>
<div class="xl" style="left:1942.8px;top:1632.6px">Sep 07,</div>
<div class="xl" style="left:1943.2px;top:1652.3px">2025</div>
<div class="tk" style="left:2168.0px"></div>
<div class="xl" style="left:2108.0px;top:1632.6px">Sep 09,</div>
<div class="xl" style="left:2108.4px;top:1652.3px">2025</div>
<div class="tk" style="left:2333.2px"></div>
<div class="xl" style="left:2273.2px;top:1632.6px">Sep 11,</div>
<div class="xl" style="left:2273.6px;top:1652.3px">2025</div>
<div class="tk" style="left:2498.4px"></div>
<div class="xl" style="left:2438.4px;top:1632.6px">Sep 13,</div>
<div class="xl" style="left:2438.8px;top:1652.3px">2025</div>
<div class="tk" style="left:2663.6px"></div>
<div class="xl" style="left:2603.6px;top:1632.6px">Sep 15,</div>
<div class="xl" style="left:2604.0px;top:1652.3px">2025</div>
<div class="t" style="left:126px;top:1755px;font-size:21.7px;color:#afb3b7"><b>0.024</b> compute capacity units</div>
<div class="ln" style="left:94px;top:1814px;width:2638px;height:2px"></div>
<div class="btn" style="left:2471px;top:1840px;width:237px;height:48px"></div>
<div class="t" style="left:2486px;top:1851px;font-size:25.8px;color:#f0f2f4">Add to dashboard</div>
<!-- right panel -->
<div class="ln" style="left:2732px;top:204px;width:2px;height:1702px"></div>
<div class="t b" style="left:2758px;top:262px;font-size:28.2px;color:#f4f6f8">Customize this visualization</div>
<svg style="left:0;top:0" width="3448" height="1000" viewBox="0 0 3448 1000" fill="none" stroke="#eceef0" stroke-width="2.4">
 <line x1="3391" y1="263" x2="3417" y2="289"/><line x1="3417" y1="263" x2="3391" y2="289"/>
 <polyline points="2762.5,648 2769,654.5 2762.5,661" stroke-width="2"/>
 <polyline points="2762.5,758 2769,764.5 2762.5,771" stroke-width="2"/>
 <polyline points="2762.5,868 2769,874.5 2762.5,881" stroke-width="2"/>
</svg>
<div class="ln" style="left:2734px;top:348px;width:714px;height:2px"></div>
<div class="t b" style="left:2758px;top:405px;font-size:27.7px;color:#f4f6f8">Basic information</div>
<div class="t" style="left:2758px;top:474px;font-size:24.4px;color:#f4f6f8;-webkit-text-stroke:0.5px #f4f6f8">Name</div>
<div class="btn" style="left:3026px;top:462px;width:402px;height:48px"></div>
<div class="ln" style="left:2734px;top:558px;width:714px;height:2px"></div>
<div class="t b" style="left:2798px;top:639px;font-size:27.9px;color:#f4f6f8">Other groups</div>
<div class="t b" style="left:2798px;top:749px;font-size:28px;color:#f4f6f8">Dashboard options</div>
<div class="t b" style="left:2798px;top:859px;font-size:27.9px;color:#f4f6f8">Refresh rate</div>
<div class="a" style="left:1457px;top:1150px;width:459px;height:495px;background:#2b3037;border-radius:8px"></div>
<svg style="left:0;top:0" width="3448" height="1906" viewBox="0 0 3448 1906"><polygon fill="#2b3037" points="1458,1452 1447,1462.7 1458,1473.5"/></svg>
<div class="t b" style="left:1481px;top:1169.5px;font-size:24.8px;color:#fff">From Aug 30, 2025 to Aug 31, 2025</div>
<div class="tr" style="top:1216.9px"><em>ES (1.50 - 2.00)</em><span>7</span></div>
<div class="tr" style="top:1264.9px"><em>FR (1.50 - 2.00)</em><span>1530</span></div>
<div class="tr" style="top:1312.9px"><em>ZA (1.50 - 2.00)</em><span>2339</span></div>
<div class="tr" style="top:1360.9px"><em>AU (1.50 - 2.00)</em><span>2049</span></div>
<div class="tr" style="top:1408.9px"><em>BR (1.50 - 2.00)</em><span>1682</span></div>
<div class="tr" style="top:1456.9px"><em>IN (1.50 - 2.00)</em><span>1264</span></div>
<div class="tr" style="top:1504.9px"><em>HK (1.50 - 2.00)</em><span>33141</span></div>
<div class="tr" style="top:1552.9px"><em>GB (1.50 - 2.00)</em><span>28902</span></div>
<div class="tr" style="top:1600.9px"><em>US (1.50 - 2.00)</em><span>165298</span></div>
</body></html>
